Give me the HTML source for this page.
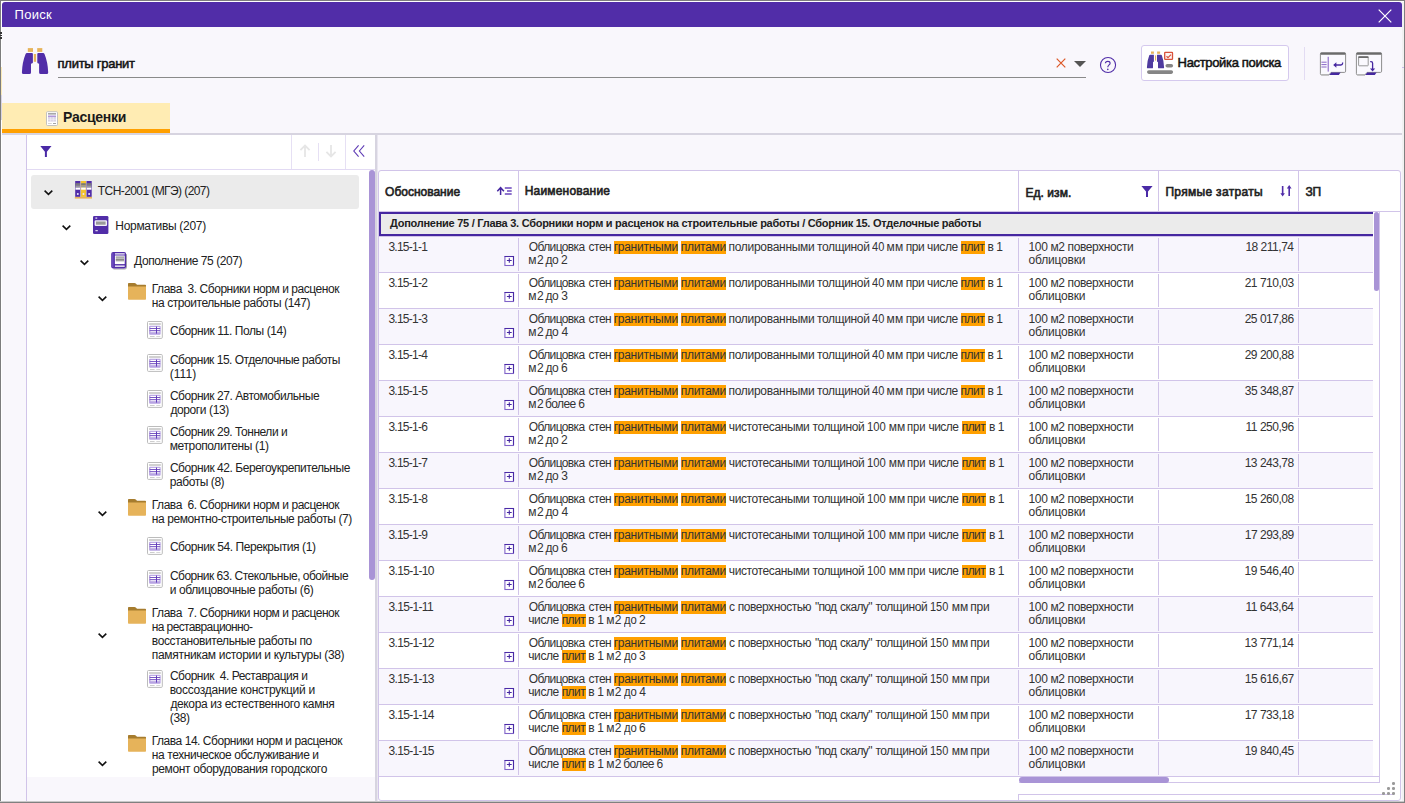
<!DOCTYPE html>
<html lang="ru"><head><meta charset="utf-8"><title>Поиск</title>
<style>
html,body{margin:0;padding:0;}
body{width:1405px;height:803px;overflow:hidden;background:#f9f7fc;font-family:"Liberation Sans",sans-serif;position:relative;}
.a{position:absolute;}
.t{position:absolute;white-space:pre;font-family:"Liberation Sans",sans-serif;}
.hl{background:#ffa000;}
svg{position:absolute;overflow:visible;}
</style></head><body>
<div class="a" style="left:0px;top:0px;width:1405px;height:803px;background:#7d7d7d;"></div>
<div class="a" style="left:1px;top:1px;width:1403px;height:801px;background:#ffffff;"></div>
<div class="a" style="left:1402px;top:2px;width:2px;height:800px;background:#f1f1f1;"></div>
<div class="a" style="left:2px;top:2px;width:1400px;height:799px;background:#f9f7fc;border-radius:3px 3px 0 0;"></div>
<div class="a" style="left:2px;top:2px;width:1400px;height:25px;background:#512da8;border-radius:3px 3px 0 0;"></div>
<div class="a" style="left:0px;top:801px;width:1405px;height:1px;background:#c9c9c9;"></div>
<div class="a" style="left:0px;top:802px;width:1405px;height:1px;background:#808080;"></div>
<div class="a" style="left:1404px;top:0px;width:1px;height:803px;background:#808080;"></div>
<div class="t" style="left:14.5px;top:7px;font-size:13px;font-weight:400;color:#ffffff;line-height:15px;letter-spacing:0.294px;">Поиск</div>
<svg style="left:1377.5px;top:8.6px" width="14" height="14" viewBox="0 0 14 14"><path d="M0.7 0.7L13.3 13.3M13.3 0.7L0.7 13.3" stroke="#fff" stroke-width="1.2" fill="none"/></svg>
<svg style="left:21px;top:47px" width="28" height="28" viewBox="21 47 28 28">
<rect x="27.8" y="48.1" width="5.2" height="3.8" fill="#e6b35a"/><rect x="37.2" y="48.1" width="5.1" height="3.8" fill="#e6b35a"/>
<rect x="33.8" y="54" width="2.3" height="7.8" fill="#e6b35a"/>
<path d="M27 52.9 H31.9 Q32.9 52.9 32.9 53.9 V62.5 Q32.9 63.5 31 63.7 V72.4 Q31 73.9 29.5 73.9 H23.4 Q21.9 73.9 21.9 72.4 Q22.3 62 25.6 54 Q26 52.9 27 52.9Z" fill="#512da8"/>
<path d="M43.1 52.9 H38.3 Q37.3 52.9 37.3 53.9 V62.5 Q37.3 63.5 39.1 63.7 V72.4 Q39.1 73.9 40.6 73.9 H46.7 Q48.2 73.9 48.2 72.4 Q47.8 62 44.5 54 Q44.1 52.9 43.1 52.9Z" fill="#512da8"/>
</svg>
<div class="t" style="left:57.6px;top:56px;font-size:13px;font-weight:400;color:#111;line-height:15px;letter-spacing:-0.267px;-webkit-text-stroke:0.5px #111;">плиты гранит</div>
<div class="a" style="left:58px;top:77px;width:1028px;height:1px;background:#8a8a8a;"></div>
<svg style="left:1056px;top:58px" width="10" height="10" viewBox="0 0 10 10"><path d="M0.7 0.7L9.3 9.3M9.3 0.7L0.7 9.3" stroke="#dc5726" stroke-width="1.2" fill="none"/></svg>
<svg style="left:1074px;top:61px" width="12" height="6" viewBox="0 0 12 6"><path d="M0 0H12L6 6Z" fill="#555"/></svg>
<svg style="left:1099px;top:56px" width="18" height="18" viewBox="0 0 18 18"><circle cx="9.02" cy="9" r="7.55" fill="none" stroke="#512da8" stroke-width="1.1"/><path d="M6.4 7.3Q6.5 5.3 8.8 5.3Q11.1 5.3 11.1 7.2Q11.1 8.3 9.9 9.1Q8.8 9.9 8.8 11.2" fill="none" stroke="#512da8" stroke-width="1.15"/><circle cx="8.8" cy="13.4" r="0.8" fill="#512da8"/></svg>
<div class="a" style="left:1141px;top:45px;width:146px;height:34px;background:#ffffff;border:1px solid #d5c9ee;border-radius:3px;"></div>
<div class="t" style="left:1177.6px;top:55px;font-size:13px;font-weight:400;color:#111;line-height:15px;letter-spacing:-0.34px;-webkit-text-stroke:0.5px #111;">Настройка поиска</div>
<div class="a" style="left:1304px;top:47px;width:1px;height:33px;background:#e3dcf3;"></div>
<div class="a" style="left:2px;top:103px;width:168px;height:26px;background:#ffecb3;"></div>
<div class="a" style="left:2px;top:129px;width:168px;height:4px;background:#ffa000;"></div>
<div class="a" style="left:2px;top:133px;width:1400px;height:2px;background:#d7d4e0;"></div>
<div class="t" style="left:63px;top:108px;font-size:14px;font-weight:700;color:#1a1a1a;line-height:18px;letter-spacing:-0.273px;">Расценки</div>
<div class="a" style="left:26px;top:135px;width:1px;height:666px;background:#d1c4e9;"></div>
<div class="a" style="left:27px;top:135px;width:348px;height:35px;background:#ffffff;"></div>
<div class="a" style="left:27px;top:169px;width:348px;height:1px;background:#e2daf3;"></div>
<div class="a" style="left:27px;top:170px;width:348px;height:607px;background:#ffffff;"></div>
<div class="a" style="left:375px;top:135px;width:2px;height:666px;background:#d7d4e0;"></div>
<div class="a" style="left:377px;top:135px;width:1px;height:666px;background:#e9e6f0;"></div>
<div class="a" style="left:369.3px;top:170px;width:5.5px;height:410px;background:#a994d6;border-radius:3px;"></div>
<div class="a" style="left:291px;top:135px;width:1px;height:34px;background:#e6e0f4;"></div>
<div class="a" style="left:345px;top:135px;width:1px;height:34px;background:#e6e0f4;"></div>
<div class="a" style="left:318px;top:143px;width:1px;height:18px;background:#e6e0f4;"></div>
<div class="a" style="left:31px;top:175px;width:328px;height:34px;background:#ebebeb;border-radius:3px;"></div>
<div class="a" style="left:378px;top:170px;width:1021px;height:629px;background:#ffffff;border:1px solid #d1c4e9;border-radius:3px;"></div>
<div class="a" style="left:518px;top:171px;width:1px;height:40px;background:#d1c4e9;"></div>
<div class="a" style="left:1018px;top:171px;width:1px;height:40px;background:#d1c4e9;"></div>
<div class="a" style="left:1158px;top:171px;width:1px;height:40px;background:#d1c4e9;"></div>
<div class="a" style="left:1298px;top:171px;width:1px;height:40px;background:#d1c4e9;"></div>
<div class="a" style="left:379px;top:211px;width:1021px;height:1px;background:#d1c4e9;"></div>
<div class="a" style="left:1379px;top:212px;width:1px;height:571px;background:#d1c4e9;"></div>
<div class="t" style="left:385.1px;top:185px;font-size:12px;font-weight:400;color:#212121;line-height:14px;letter-spacing:-0.01px;-webkit-text-stroke:0.6px #212121;">Обоснование</div>
<div class="t" style="left:524.7px;top:184px;font-size:12px;font-weight:400;color:#212121;line-height:14px;letter-spacing:0.193px;-webkit-text-stroke:0.6px #212121;">Наименование</div>
<div class="t" style="left:1025.4px;top:186px;font-size:12px;font-weight:400;color:#212121;line-height:14px;letter-spacing:0.066px;-webkit-text-stroke:0.6px #212121;">Ед. изм.</div>
<div class="t" style="left:1165.4px;top:185px;font-size:12px;font-weight:400;color:#212121;line-height:14px;letter-spacing:0.309px;-webkit-text-stroke:0.6px #212121;">Прямые затраты</div>
<div class="t" style="left:1305.4px;top:185px;font-size:12px;font-weight:400;color:#212121;line-height:14px;letter-spacing:-0.188px;-webkit-text-stroke:0.6px #212121;">ЗП</div>
<div class="a" style="left:379px;top:212px;width:994px;height:24px;background:#ebebeb;box-sizing:border-box;border:2px solid #4527a0;border-right:none;"></div>
<div class="t" style="left:390px;top:217px;font-size:11px;font-weight:700;color:#212121;line-height:13px;letter-spacing:-0.267px;">Дополнение 75 / Глава 3. Сборники норм и расценок на строительные работы / Сборник 15. Отделочные работы</div>
<div class="a" style="left:379px;top:236px;width:994px;height:1px;background:#d1c4e9;"></div>
<div class="a" style="left:379px;top:237px;width:994px;height:35px;background:#f8f6fd;"></div>
<div class="a" style="left:379px;top:272px;width:994px;height:1px;background:#d1c4e9;"></div>
<div class="a" style="left:379px;top:308px;width:994px;height:1px;background:#d1c4e9;"></div>
<div class="a" style="left:379px;top:309px;width:994px;height:35px;background:#f8f6fd;"></div>
<div class="a" style="left:379px;top:344px;width:994px;height:1px;background:#d1c4e9;"></div>
<div class="a" style="left:379px;top:380px;width:994px;height:1px;background:#d1c4e9;"></div>
<div class="a" style="left:379px;top:381px;width:994px;height:35px;background:#f8f6fd;"></div>
<div class="a" style="left:379px;top:416px;width:994px;height:1px;background:#d1c4e9;"></div>
<div class="a" style="left:379px;top:452px;width:994px;height:1px;background:#d1c4e9;"></div>
<div class="a" style="left:379px;top:453px;width:994px;height:35px;background:#f8f6fd;"></div>
<div class="a" style="left:379px;top:488px;width:994px;height:1px;background:#d1c4e9;"></div>
<div class="a" style="left:379px;top:524px;width:994px;height:1px;background:#d1c4e9;"></div>
<div class="a" style="left:379px;top:525px;width:994px;height:35px;background:#f8f6fd;"></div>
<div class="a" style="left:379px;top:560px;width:994px;height:1px;background:#d1c4e9;"></div>
<div class="a" style="left:379px;top:596px;width:994px;height:1px;background:#d1c4e9;"></div>
<div class="a" style="left:379px;top:597px;width:994px;height:35px;background:#f8f6fd;"></div>
<div class="a" style="left:379px;top:632px;width:994px;height:1px;background:#d1c4e9;"></div>
<div class="a" style="left:379px;top:668px;width:994px;height:1px;background:#d1c4e9;"></div>
<div class="a" style="left:379px;top:669px;width:994px;height:35px;background:#f8f6fd;"></div>
<div class="a" style="left:379px;top:704px;width:994px;height:1px;background:#d1c4e9;"></div>
<div class="a" style="left:379px;top:740px;width:994px;height:1px;background:#d1c4e9;"></div>
<div class="a" style="left:379px;top:741px;width:994px;height:35px;background:#f8f6fd;"></div>
<div class="a" style="left:379px;top:776px;width:1000px;height:1px;background:#d1c4e9;"></div>
<div class="a" style="left:518px;top:237.6px;width:1px;height:33.6px;background:#d1c4e9;"></div>
<div class="a" style="left:1018px;top:237.6px;width:1px;height:33.6px;background:#d1c4e9;"></div>
<div class="a" style="left:1158px;top:237.6px;width:1px;height:33.6px;background:#d1c4e9;"></div>
<div class="a" style="left:1298px;top:237.6px;width:1px;height:33.6px;background:#d1c4e9;"></div>
<div class="a" style="left:518px;top:273.6px;width:1px;height:33.6px;background:#d1c4e9;"></div>
<div class="a" style="left:1018px;top:273.6px;width:1px;height:33.6px;background:#d1c4e9;"></div>
<div class="a" style="left:1158px;top:273.6px;width:1px;height:33.6px;background:#d1c4e9;"></div>
<div class="a" style="left:1298px;top:273.6px;width:1px;height:33.6px;background:#d1c4e9;"></div>
<div class="a" style="left:518px;top:309.6px;width:1px;height:33.6px;background:#d1c4e9;"></div>
<div class="a" style="left:1018px;top:309.6px;width:1px;height:33.6px;background:#d1c4e9;"></div>
<div class="a" style="left:1158px;top:309.6px;width:1px;height:33.6px;background:#d1c4e9;"></div>
<div class="a" style="left:1298px;top:309.6px;width:1px;height:33.6px;background:#d1c4e9;"></div>
<div class="a" style="left:518px;top:345.6px;width:1px;height:33.6px;background:#d1c4e9;"></div>
<div class="a" style="left:1018px;top:345.6px;width:1px;height:33.6px;background:#d1c4e9;"></div>
<div class="a" style="left:1158px;top:345.6px;width:1px;height:33.6px;background:#d1c4e9;"></div>
<div class="a" style="left:1298px;top:345.6px;width:1px;height:33.6px;background:#d1c4e9;"></div>
<div class="a" style="left:518px;top:381.6px;width:1px;height:33.6px;background:#d1c4e9;"></div>
<div class="a" style="left:1018px;top:381.6px;width:1px;height:33.6px;background:#d1c4e9;"></div>
<div class="a" style="left:1158px;top:381.6px;width:1px;height:33.6px;background:#d1c4e9;"></div>
<div class="a" style="left:1298px;top:381.6px;width:1px;height:33.6px;background:#d1c4e9;"></div>
<div class="a" style="left:518px;top:417.6px;width:1px;height:33.6px;background:#d1c4e9;"></div>
<div class="a" style="left:1018px;top:417.6px;width:1px;height:33.6px;background:#d1c4e9;"></div>
<div class="a" style="left:1158px;top:417.6px;width:1px;height:33.6px;background:#d1c4e9;"></div>
<div class="a" style="left:1298px;top:417.6px;width:1px;height:33.6px;background:#d1c4e9;"></div>
<div class="a" style="left:518px;top:453.6px;width:1px;height:33.6px;background:#d1c4e9;"></div>
<div class="a" style="left:1018px;top:453.6px;width:1px;height:33.6px;background:#d1c4e9;"></div>
<div class="a" style="left:1158px;top:453.6px;width:1px;height:33.6px;background:#d1c4e9;"></div>
<div class="a" style="left:1298px;top:453.6px;width:1px;height:33.6px;background:#d1c4e9;"></div>
<div class="a" style="left:518px;top:489.6px;width:1px;height:33.6px;background:#d1c4e9;"></div>
<div class="a" style="left:1018px;top:489.6px;width:1px;height:33.6px;background:#d1c4e9;"></div>
<div class="a" style="left:1158px;top:489.6px;width:1px;height:33.6px;background:#d1c4e9;"></div>
<div class="a" style="left:1298px;top:489.6px;width:1px;height:33.6px;background:#d1c4e9;"></div>
<div class="a" style="left:518px;top:525.6px;width:1px;height:33.6px;background:#d1c4e9;"></div>
<div class="a" style="left:1018px;top:525.6px;width:1px;height:33.6px;background:#d1c4e9;"></div>
<div class="a" style="left:1158px;top:525.6px;width:1px;height:33.6px;background:#d1c4e9;"></div>
<div class="a" style="left:1298px;top:525.6px;width:1px;height:33.6px;background:#d1c4e9;"></div>
<div class="a" style="left:518px;top:561.6px;width:1px;height:33.6px;background:#d1c4e9;"></div>
<div class="a" style="left:1018px;top:561.6px;width:1px;height:33.6px;background:#d1c4e9;"></div>
<div class="a" style="left:1158px;top:561.6px;width:1px;height:33.6px;background:#d1c4e9;"></div>
<div class="a" style="left:1298px;top:561.6px;width:1px;height:33.6px;background:#d1c4e9;"></div>
<div class="a" style="left:518px;top:597.6px;width:1px;height:33.6px;background:#d1c4e9;"></div>
<div class="a" style="left:1018px;top:597.6px;width:1px;height:33.6px;background:#d1c4e9;"></div>
<div class="a" style="left:1158px;top:597.6px;width:1px;height:33.6px;background:#d1c4e9;"></div>
<div class="a" style="left:1298px;top:597.6px;width:1px;height:33.6px;background:#d1c4e9;"></div>
<div class="a" style="left:518px;top:633.6px;width:1px;height:33.6px;background:#d1c4e9;"></div>
<div class="a" style="left:1018px;top:633.6px;width:1px;height:33.6px;background:#d1c4e9;"></div>
<div class="a" style="left:1158px;top:633.6px;width:1px;height:33.6px;background:#d1c4e9;"></div>
<div class="a" style="left:1298px;top:633.6px;width:1px;height:33.6px;background:#d1c4e9;"></div>
<div class="a" style="left:518px;top:669.6px;width:1px;height:33.6px;background:#d1c4e9;"></div>
<div class="a" style="left:1018px;top:669.6px;width:1px;height:33.6px;background:#d1c4e9;"></div>
<div class="a" style="left:1158px;top:669.6px;width:1px;height:33.6px;background:#d1c4e9;"></div>
<div class="a" style="left:1298px;top:669.6px;width:1px;height:33.6px;background:#d1c4e9;"></div>
<div class="a" style="left:518px;top:705.6px;width:1px;height:33.6px;background:#d1c4e9;"></div>
<div class="a" style="left:1018px;top:705.6px;width:1px;height:33.6px;background:#d1c4e9;"></div>
<div class="a" style="left:1158px;top:705.6px;width:1px;height:33.6px;background:#d1c4e9;"></div>
<div class="a" style="left:1298px;top:705.6px;width:1px;height:33.6px;background:#d1c4e9;"></div>
<div class="a" style="left:518px;top:741.6px;width:1px;height:33.6px;background:#d1c4e9;"></div>
<div class="a" style="left:1018px;top:741.6px;width:1px;height:33.6px;background:#d1c4e9;"></div>
<div class="a" style="left:1158px;top:741.6px;width:1px;height:33.6px;background:#d1c4e9;"></div>
<div class="a" style="left:1298px;top:741.6px;width:1px;height:33.6px;background:#d1c4e9;"></div>
<div class="t" style="left:388.44px;top:240px;font-size:12px;color:#333333;line-height:14px;letter-spacing:-0.751px">3.15-1-1</div>
<div class="a" style="left:613.9px;top:241px;width:64.0px;height:13px;background:#ffa000;"></div>
<div class="a" style="left:680.9px;top:241px;width:45.2px;height:13px;background:#ffa000;"></div>
<div class="a" style="left:960.7px;top:241px;width:24.4px;height:13px;background:#ffa000;"></div>
<div class="t" style="left:528.83px;top:240px;font-size:12px;font-weight:400;color:#333333;line-height:14px;letter-spacing:-0.636px;">Облицовка</div>
<div class="t" style="left:588.59px;top:240px;font-size:12px;font-weight:400;color:#333333;line-height:14px;letter-spacing:-0.51px;">стен</div>
<div class="t" style="left:613.67px;top:240px;font-size:12px;font-weight:400;color:#333333;line-height:14px;letter-spacing:-0.256px;">гранитными</div>
<div class="t" style="left:680.67px;top:240px;font-size:12px;font-weight:400;color:#333333;line-height:14px;letter-spacing:-0.257px;">плитами</div>
<div class="t" style="left:728.47px;top:240px;font-size:12px;font-weight:400;color:#333333;line-height:14px;letter-spacing:-0.288px;">полированными</div>
<div class="t" style="left:816.89px;top:240px;font-size:12px;font-weight:400;color:#333333;line-height:14px;letter-spacing:-0.332px;">толщиной</div>
<div class="t" style="left:872.05px;top:240px;font-size:12px;font-weight:400;color:#333333;line-height:14px;transform-origin:0 0;transform:scaleX(0.9195);">40</div>
<div class="t" style="left:886.57px;top:240px;font-size:12px;font-weight:400;color:#333333;line-height:14px;letter-spacing:0.258px;">мм</div>
<div class="t" style="left:905.67px;top:240px;font-size:12px;font-weight:400;color:#333333;line-height:14px;letter-spacing:-0.405px;">при</div>
<div class="t" style="left:927.09px;top:240px;font-size:12px;font-weight:400;color:#333333;line-height:14px;letter-spacing:-0.373px;">числе</div>
<div class="t" style="left:960.47px;top:240px;font-size:12px;font-weight:400;color:#333333;line-height:14px;letter-spacing:-0.489px;">плит</div>
<div class="t" style="left:987.47px;top:240px;font-size:12px;font-weight:400;color:#333333;line-height:14px;letter-spacing:0px;">в</div>
<div class="t" style="left:996.29px;top:240px;font-size:12px;font-weight:400;color:#333333;line-height:14px;letter-spacing:0px;">1</div>
<div class="t" style="left:528.17px;top:253px;font-size:12px;font-weight:400;color:#333333;line-height:14px;letter-spacing:0.598px;">м2</div>
<div class="t" style="left:545.48px;top:253px;font-size:12px;font-weight:400;color:#333333;line-height:14px;letter-spacing:-0.366px;">до</div>
<div class="t" style="left:561.1px;top:253px;font-size:12px;font-weight:400;color:#333333;line-height:14px;letter-spacing:0px;">2</div>
<div class="t" style="left:1028.59px;top:240px;font-size:12px;font-weight:400;color:#333333;line-height:14px;letter-spacing:-0.383px;">100 м2 поверхности</div>
<div class="t" style="left:1028.6px;top:253px;font-size:12px;font-weight:400;color:#333333;line-height:14px;letter-spacing:-0.19px;">облицовки</div>
<div class="t" style="left:1245.38px;top:240px;font-size:12px;color:#333333;line-height:14px;letter-spacing:-0.479px">18 211,74</div>
<svg style="left:504px;top:256px" width="11" height="11" viewBox="0 0 11 11"><rect x="-0.3" y="-0.6" width="10.9" height="11.2" rx="1.5" fill="#fff" opacity="0.7"/><rect x="0.9" y="0.5" width="8.6" height="9" fill="#fff" stroke="#7f63c8" stroke-width="1.1"/><path d="M0.6 0.5H9.5V9" stroke="#4a2aa6" stroke-width="1.1" fill="none"/><path d="M5.3 2.2V6.8M2.9 4.5H7.7" stroke="#4527a0" stroke-width="1.1"/></svg>
<div class="t" style="left:388.44px;top:276px;font-size:12px;color:#333333;line-height:14px;letter-spacing:-0.751px">3.15-1-2</div>
<div class="a" style="left:613.9px;top:277px;width:64.0px;height:13px;background:#ffa000;"></div>
<div class="a" style="left:680.9px;top:277px;width:45.2px;height:13px;background:#ffa000;"></div>
<div class="a" style="left:960.7px;top:277px;width:24.4px;height:13px;background:#ffa000;"></div>
<div class="t" style="left:528.83px;top:276px;font-size:12px;font-weight:400;color:#333333;line-height:14px;letter-spacing:-0.636px;">Облицовка</div>
<div class="t" style="left:588.59px;top:276px;font-size:12px;font-weight:400;color:#333333;line-height:14px;letter-spacing:-0.51px;">стен</div>
<div class="t" style="left:613.67px;top:276px;font-size:12px;font-weight:400;color:#333333;line-height:14px;letter-spacing:-0.256px;">гранитными</div>
<div class="t" style="left:680.67px;top:276px;font-size:12px;font-weight:400;color:#333333;line-height:14px;letter-spacing:-0.257px;">плитами</div>
<div class="t" style="left:728.47px;top:276px;font-size:12px;font-weight:400;color:#333333;line-height:14px;letter-spacing:-0.288px;">полированными</div>
<div class="t" style="left:816.89px;top:276px;font-size:12px;font-weight:400;color:#333333;line-height:14px;letter-spacing:-0.332px;">толщиной</div>
<div class="t" style="left:872.05px;top:276px;font-size:12px;font-weight:400;color:#333333;line-height:14px;transform-origin:0 0;transform:scaleX(0.9195);">40</div>
<div class="t" style="left:886.57px;top:276px;font-size:12px;font-weight:400;color:#333333;line-height:14px;letter-spacing:0.258px;">мм</div>
<div class="t" style="left:905.67px;top:276px;font-size:12px;font-weight:400;color:#333333;line-height:14px;letter-spacing:-0.405px;">при</div>
<div class="t" style="left:927.09px;top:276px;font-size:12px;font-weight:400;color:#333333;line-height:14px;letter-spacing:-0.373px;">числе</div>
<div class="t" style="left:960.47px;top:276px;font-size:12px;font-weight:400;color:#333333;line-height:14px;letter-spacing:-0.489px;">плит</div>
<div class="t" style="left:987.47px;top:276px;font-size:12px;font-weight:400;color:#333333;line-height:14px;letter-spacing:0px;">в</div>
<div class="t" style="left:996.29px;top:276px;font-size:12px;font-weight:400;color:#333333;line-height:14px;letter-spacing:0px;">1</div>
<div class="t" style="left:528.17px;top:289px;font-size:12px;font-weight:400;color:#333333;line-height:14px;letter-spacing:0.598px;">м2</div>
<div class="t" style="left:545.48px;top:289px;font-size:12px;font-weight:400;color:#333333;line-height:14px;letter-spacing:-0.366px;">до</div>
<div class="t" style="left:561.24px;top:289px;font-size:12px;font-weight:400;color:#333333;line-height:14px;letter-spacing:0px;">3</div>
<div class="t" style="left:1028.59px;top:276px;font-size:12px;font-weight:400;color:#333333;line-height:14px;letter-spacing:-0.383px;">100 м2 поверхности</div>
<div class="t" style="left:1028.6px;top:289px;font-size:12px;font-weight:400;color:#333333;line-height:14px;letter-spacing:-0.19px;">облицовки</div>
<div class="t" style="left:1244.67px;top:276px;font-size:12px;color:#333333;line-height:14px;letter-spacing:-0.479px">21 710,03</div>
<svg style="left:504px;top:292px" width="11" height="11" viewBox="0 0 11 11"><rect x="-0.3" y="-0.6" width="10.9" height="11.2" rx="1.5" fill="#fff" opacity="0.7"/><rect x="0.9" y="0.5" width="8.6" height="9" fill="#fff" stroke="#7f63c8" stroke-width="1.1"/><path d="M0.6 0.5H9.5V9" stroke="#4a2aa6" stroke-width="1.1" fill="none"/><path d="M5.3 2.2V6.8M2.9 4.5H7.7" stroke="#4527a0" stroke-width="1.1"/></svg>
<div class="t" style="left:388.44px;top:312px;font-size:12px;color:#333333;line-height:14px;letter-spacing:-0.751px">3.15-1-3</div>
<div class="a" style="left:613.9px;top:313px;width:64.0px;height:13px;background:#ffa000;"></div>
<div class="a" style="left:680.9px;top:313px;width:45.2px;height:13px;background:#ffa000;"></div>
<div class="a" style="left:960.7px;top:313px;width:24.4px;height:13px;background:#ffa000;"></div>
<div class="t" style="left:528.83px;top:312px;font-size:12px;font-weight:400;color:#333333;line-height:14px;letter-spacing:-0.636px;">Облицовка</div>
<div class="t" style="left:588.59px;top:312px;font-size:12px;font-weight:400;color:#333333;line-height:14px;letter-spacing:-0.51px;">стен</div>
<div class="t" style="left:613.67px;top:312px;font-size:12px;font-weight:400;color:#333333;line-height:14px;letter-spacing:-0.256px;">гранитными</div>
<div class="t" style="left:680.67px;top:312px;font-size:12px;font-weight:400;color:#333333;line-height:14px;letter-spacing:-0.257px;">плитами</div>
<div class="t" style="left:728.47px;top:312px;font-size:12px;font-weight:400;color:#333333;line-height:14px;letter-spacing:-0.288px;">полированными</div>
<div class="t" style="left:816.89px;top:312px;font-size:12px;font-weight:400;color:#333333;line-height:14px;letter-spacing:-0.332px;">толщиной</div>
<div class="t" style="left:872.05px;top:312px;font-size:12px;font-weight:400;color:#333333;line-height:14px;transform-origin:0 0;transform:scaleX(0.9195);">40</div>
<div class="t" style="left:886.57px;top:312px;font-size:12px;font-weight:400;color:#333333;line-height:14px;letter-spacing:0.258px;">мм</div>
<div class="t" style="left:905.67px;top:312px;font-size:12px;font-weight:400;color:#333333;line-height:14px;letter-spacing:-0.405px;">при</div>
<div class="t" style="left:927.09px;top:312px;font-size:12px;font-weight:400;color:#333333;line-height:14px;letter-spacing:-0.373px;">числе</div>
<div class="t" style="left:960.47px;top:312px;font-size:12px;font-weight:400;color:#333333;line-height:14px;letter-spacing:-0.489px;">плит</div>
<div class="t" style="left:987.47px;top:312px;font-size:12px;font-weight:400;color:#333333;line-height:14px;letter-spacing:0px;">в</div>
<div class="t" style="left:996.29px;top:312px;font-size:12px;font-weight:400;color:#333333;line-height:14px;letter-spacing:0px;">1</div>
<div class="t" style="left:528.17px;top:325px;font-size:12px;font-weight:400;color:#333333;line-height:14px;letter-spacing:0.598px;">м2</div>
<div class="t" style="left:545.48px;top:325px;font-size:12px;font-weight:400;color:#333333;line-height:14px;letter-spacing:-0.366px;">до</div>
<div class="t" style="left:561.42px;top:325px;font-size:12px;font-weight:400;color:#333333;line-height:14px;letter-spacing:0px;">4</div>
<div class="t" style="left:1028.59px;top:312px;font-size:12px;font-weight:400;color:#333333;line-height:14px;letter-spacing:-0.383px;">100 м2 поверхности</div>
<div class="t" style="left:1028.6px;top:325px;font-size:12px;font-weight:400;color:#333333;line-height:14px;letter-spacing:-0.19px;">облицовки</div>
<div class="t" style="left:1244.67px;top:312px;font-size:12px;color:#333333;line-height:14px;letter-spacing:-0.479px">25 017,86</div>
<svg style="left:504px;top:328px" width="11" height="11" viewBox="0 0 11 11"><rect x="-0.3" y="-0.6" width="10.9" height="11.2" rx="1.5" fill="#fff" opacity="0.7"/><rect x="0.9" y="0.5" width="8.6" height="9" fill="#fff" stroke="#7f63c8" stroke-width="1.1"/><path d="M0.6 0.5H9.5V9" stroke="#4a2aa6" stroke-width="1.1" fill="none"/><path d="M5.3 2.2V6.8M2.9 4.5H7.7" stroke="#4527a0" stroke-width="1.1"/></svg>
<div class="t" style="left:388.44px;top:348px;font-size:12px;color:#333333;line-height:14px;letter-spacing:-0.751px">3.15-1-4</div>
<div class="a" style="left:613.9px;top:349px;width:64.0px;height:13px;background:#ffa000;"></div>
<div class="a" style="left:680.9px;top:349px;width:45.2px;height:13px;background:#ffa000;"></div>
<div class="a" style="left:960.7px;top:349px;width:24.4px;height:13px;background:#ffa000;"></div>
<div class="t" style="left:528.83px;top:348px;font-size:12px;font-weight:400;color:#333333;line-height:14px;letter-spacing:-0.636px;">Облицовка</div>
<div class="t" style="left:588.59px;top:348px;font-size:12px;font-weight:400;color:#333333;line-height:14px;letter-spacing:-0.51px;">стен</div>
<div class="t" style="left:613.67px;top:348px;font-size:12px;font-weight:400;color:#333333;line-height:14px;letter-spacing:-0.256px;">гранитными</div>
<div class="t" style="left:680.67px;top:348px;font-size:12px;font-weight:400;color:#333333;line-height:14px;letter-spacing:-0.257px;">плитами</div>
<div class="t" style="left:728.47px;top:348px;font-size:12px;font-weight:400;color:#333333;line-height:14px;letter-spacing:-0.288px;">полированными</div>
<div class="t" style="left:816.89px;top:348px;font-size:12px;font-weight:400;color:#333333;line-height:14px;letter-spacing:-0.332px;">толщиной</div>
<div class="t" style="left:872.05px;top:348px;font-size:12px;font-weight:400;color:#333333;line-height:14px;transform-origin:0 0;transform:scaleX(0.9195);">40</div>
<div class="t" style="left:886.57px;top:348px;font-size:12px;font-weight:400;color:#333333;line-height:14px;letter-spacing:0.258px;">мм</div>
<div class="t" style="left:905.67px;top:348px;font-size:12px;font-weight:400;color:#333333;line-height:14px;letter-spacing:-0.405px;">при</div>
<div class="t" style="left:927.09px;top:348px;font-size:12px;font-weight:400;color:#333333;line-height:14px;letter-spacing:-0.373px;">числе</div>
<div class="t" style="left:960.47px;top:348px;font-size:12px;font-weight:400;color:#333333;line-height:14px;letter-spacing:-0.489px;">плит</div>
<div class="t" style="left:987.47px;top:348px;font-size:12px;font-weight:400;color:#333333;line-height:14px;letter-spacing:0px;">в</div>
<div class="t" style="left:996.29px;top:348px;font-size:12px;font-weight:400;color:#333333;line-height:14px;letter-spacing:0px;">1</div>
<div class="t" style="left:528.17px;top:361px;font-size:12px;font-weight:400;color:#333333;line-height:14px;letter-spacing:0.598px;">м2</div>
<div class="t" style="left:545.48px;top:361px;font-size:12px;font-weight:400;color:#333333;line-height:14px;letter-spacing:-0.366px;">до</div>
<div class="t" style="left:561.09px;top:361px;font-size:12px;font-weight:400;color:#333333;line-height:14px;letter-spacing:0px;">6</div>
<div class="t" style="left:1028.59px;top:348px;font-size:12px;font-weight:400;color:#333333;line-height:14px;letter-spacing:-0.383px;">100 м2 поверхности</div>
<div class="t" style="left:1028.6px;top:361px;font-size:12px;font-weight:400;color:#333333;line-height:14px;letter-spacing:-0.19px;">облицовки</div>
<div class="t" style="left:1244.66px;top:348px;font-size:12px;color:#333333;line-height:14px;letter-spacing:-0.479px">29 200,88</div>
<svg style="left:504px;top:364px" width="11" height="11" viewBox="0 0 11 11"><rect x="-0.3" y="-0.6" width="10.9" height="11.2" rx="1.5" fill="#fff" opacity="0.7"/><rect x="0.9" y="0.5" width="8.6" height="9" fill="#fff" stroke="#7f63c8" stroke-width="1.1"/><path d="M0.6 0.5H9.5V9" stroke="#4a2aa6" stroke-width="1.1" fill="none"/><path d="M5.3 2.2V6.8M2.9 4.5H7.7" stroke="#4527a0" stroke-width="1.1"/></svg>
<div class="t" style="left:388.44px;top:384px;font-size:12px;color:#333333;line-height:14px;letter-spacing:-0.751px">3.15-1-5</div>
<div class="a" style="left:613.9px;top:385px;width:64.0px;height:13px;background:#ffa000;"></div>
<div class="a" style="left:680.9px;top:385px;width:45.2px;height:13px;background:#ffa000;"></div>
<div class="a" style="left:960.7px;top:385px;width:24.4px;height:13px;background:#ffa000;"></div>
<div class="t" style="left:528.83px;top:384px;font-size:12px;font-weight:400;color:#333333;line-height:14px;letter-spacing:-0.636px;">Облицовка</div>
<div class="t" style="left:588.59px;top:384px;font-size:12px;font-weight:400;color:#333333;line-height:14px;letter-spacing:-0.51px;">стен</div>
<div class="t" style="left:613.67px;top:384px;font-size:12px;font-weight:400;color:#333333;line-height:14px;letter-spacing:-0.256px;">гранитными</div>
<div class="t" style="left:680.67px;top:384px;font-size:12px;font-weight:400;color:#333333;line-height:14px;letter-spacing:-0.257px;">плитами</div>
<div class="t" style="left:728.47px;top:384px;font-size:12px;font-weight:400;color:#333333;line-height:14px;letter-spacing:-0.288px;">полированными</div>
<div class="t" style="left:816.89px;top:384px;font-size:12px;font-weight:400;color:#333333;line-height:14px;letter-spacing:-0.332px;">толщиной</div>
<div class="t" style="left:872.05px;top:384px;font-size:12px;font-weight:400;color:#333333;line-height:14px;transform-origin:0 0;transform:scaleX(0.9195);">40</div>
<div class="t" style="left:886.57px;top:384px;font-size:12px;font-weight:400;color:#333333;line-height:14px;letter-spacing:0.258px;">мм</div>
<div class="t" style="left:905.67px;top:384px;font-size:12px;font-weight:400;color:#333333;line-height:14px;letter-spacing:-0.405px;">при</div>
<div class="t" style="left:927.09px;top:384px;font-size:12px;font-weight:400;color:#333333;line-height:14px;letter-spacing:-0.373px;">числе</div>
<div class="t" style="left:960.47px;top:384px;font-size:12px;font-weight:400;color:#333333;line-height:14px;letter-spacing:-0.489px;">плит</div>
<div class="t" style="left:987.47px;top:384px;font-size:12px;font-weight:400;color:#333333;line-height:14px;letter-spacing:0px;">в</div>
<div class="t" style="left:996.29px;top:384px;font-size:12px;font-weight:400;color:#333333;line-height:14px;letter-spacing:0px;">1</div>
<div class="t" style="left:528.17px;top:397px;font-size:12px;font-weight:400;color:#333333;line-height:14px;letter-spacing:0.598px;">м2</div>
<div class="t" style="left:545.1px;top:397px;font-size:12px;font-weight:400;color:#333333;line-height:14px;letter-spacing:-0.626px;">более</div>
<div class="t" style="left:578.19px;top:397px;font-size:12px;font-weight:400;color:#333333;line-height:14px;letter-spacing:0px;">6</div>
<div class="t" style="left:1028.59px;top:384px;font-size:12px;font-weight:400;color:#333333;line-height:14px;letter-spacing:-0.383px;">100 м2 поверхности</div>
<div class="t" style="left:1028.6px;top:397px;font-size:12px;font-weight:400;color:#333333;line-height:14px;letter-spacing:-0.19px;">облицовки</div>
<div class="t" style="left:1244.74px;top:384px;font-size:12px;color:#333333;line-height:14px;letter-spacing:-0.479px">35 348,87</div>
<svg style="left:504px;top:400px" width="11" height="11" viewBox="0 0 11 11"><rect x="-0.3" y="-0.6" width="10.9" height="11.2" rx="1.5" fill="#fff" opacity="0.7"/><rect x="0.9" y="0.5" width="8.6" height="9" fill="#fff" stroke="#7f63c8" stroke-width="1.1"/><path d="M0.6 0.5H9.5V9" stroke="#4a2aa6" stroke-width="1.1" fill="none"/><path d="M5.3 2.2V6.8M2.9 4.5H7.7" stroke="#4527a0" stroke-width="1.1"/></svg>
<div class="t" style="left:388.44px;top:420px;font-size:12px;color:#333333;line-height:14px;letter-spacing:-0.751px">3.15-1-6</div>
<div class="a" style="left:613.9px;top:421px;width:64.0px;height:13px;background:#ffa000;"></div>
<div class="a" style="left:680.9px;top:421px;width:45.2px;height:13px;background:#ffa000;"></div>
<div class="a" style="left:961.9px;top:421px;width:24.3px;height:13px;background:#ffa000;"></div>
<div class="t" style="left:528.83px;top:420px;font-size:12px;font-weight:400;color:#333333;line-height:14px;letter-spacing:-0.636px;">Облицовка</div>
<div class="t" style="left:588.59px;top:420px;font-size:12px;font-weight:400;color:#333333;line-height:14px;letter-spacing:-0.51px;">стен</div>
<div class="t" style="left:613.67px;top:420px;font-size:12px;font-weight:400;color:#333333;line-height:14px;letter-spacing:-0.256px;">гранитными</div>
<div class="t" style="left:680.67px;top:420px;font-size:12px;font-weight:400;color:#333333;line-height:14px;letter-spacing:-0.257px;">плитами</div>
<div class="t" style="left:728.79px;top:420px;font-size:12px;font-weight:400;color:#333333;line-height:14px;letter-spacing:-0.383px;">чистотесаными</div>
<div class="t" style="left:812.59px;top:420px;font-size:12px;font-weight:400;color:#333333;line-height:14px;letter-spacing:-0.475px;">толщиной</div>
<div class="t" style="left:867.44px;top:420px;font-size:12px;font-weight:400;color:#333333;line-height:14px;transform-origin:0 0;transform:scaleX(0.9384);">100</div>
<div class="t" style="left:888.67px;top:420px;font-size:12px;font-weight:400;color:#333333;line-height:14px;letter-spacing:0.058px;">мм</div>
<div class="t" style="left:907.42px;top:420px;font-size:12px;font-weight:400;color:#333333;line-height:14px;transform-origin:0 0;transform:scaleX(0.939);">при</div>
<div class="t" style="left:928.49px;top:420px;font-size:12px;font-weight:400;color:#333333;line-height:14px;letter-spacing:-0.548px;">числе</div>
<div class="t" style="left:961.67px;top:420px;font-size:12px;font-weight:400;color:#333333;line-height:14px;letter-spacing:-0.522px;">плит</div>
<div class="t" style="left:988.97px;top:420px;font-size:12px;font-weight:400;color:#333333;line-height:14px;letter-spacing:0px;">в</div>
<div class="t" style="left:997.69px;top:420px;font-size:12px;font-weight:400;color:#333333;line-height:14px;letter-spacing:0px;">1</div>
<div class="t" style="left:528.17px;top:433px;font-size:12px;font-weight:400;color:#333333;line-height:14px;letter-spacing:0.598px;">м2</div>
<div class="t" style="left:545.48px;top:433px;font-size:12px;font-weight:400;color:#333333;line-height:14px;letter-spacing:-0.366px;">до</div>
<div class="t" style="left:561.1px;top:433px;font-size:12px;font-weight:400;color:#333333;line-height:14px;letter-spacing:0px;">2</div>
<div class="t" style="left:1028.59px;top:420px;font-size:12px;font-weight:400;color:#333333;line-height:14px;letter-spacing:-0.383px;">100 м2 поверхности</div>
<div class="t" style="left:1028.6px;top:433px;font-size:12px;font-weight:400;color:#333333;line-height:14px;letter-spacing:-0.19px;">облицовки</div>
<div class="t" style="left:1245.56px;top:420px;font-size:12px;color:#333333;line-height:14px;letter-spacing:-0.479px">11 250,96</div>
<svg style="left:504px;top:436px" width="11" height="11" viewBox="0 0 11 11"><rect x="-0.3" y="-0.6" width="10.9" height="11.2" rx="1.5" fill="#fff" opacity="0.7"/><rect x="0.9" y="0.5" width="8.6" height="9" fill="#fff" stroke="#7f63c8" stroke-width="1.1"/><path d="M0.6 0.5H9.5V9" stroke="#4a2aa6" stroke-width="1.1" fill="none"/><path d="M5.3 2.2V6.8M2.9 4.5H7.7" stroke="#4527a0" stroke-width="1.1"/></svg>
<div class="t" style="left:388.44px;top:456px;font-size:12px;color:#333333;line-height:14px;letter-spacing:-0.751px">3.15-1-7</div>
<div class="a" style="left:613.9px;top:457px;width:64.0px;height:13px;background:#ffa000;"></div>
<div class="a" style="left:680.9px;top:457px;width:45.2px;height:13px;background:#ffa000;"></div>
<div class="a" style="left:961.9px;top:457px;width:24.3px;height:13px;background:#ffa000;"></div>
<div class="t" style="left:528.83px;top:456px;font-size:12px;font-weight:400;color:#333333;line-height:14px;letter-spacing:-0.636px;">Облицовка</div>
<div class="t" style="left:588.59px;top:456px;font-size:12px;font-weight:400;color:#333333;line-height:14px;letter-spacing:-0.51px;">стен</div>
<div class="t" style="left:613.67px;top:456px;font-size:12px;font-weight:400;color:#333333;line-height:14px;letter-spacing:-0.256px;">гранитными</div>
<div class="t" style="left:680.67px;top:456px;font-size:12px;font-weight:400;color:#333333;line-height:14px;letter-spacing:-0.257px;">плитами</div>
<div class="t" style="left:728.79px;top:456px;font-size:12px;font-weight:400;color:#333333;line-height:14px;letter-spacing:-0.383px;">чистотесаными</div>
<div class="t" style="left:812.59px;top:456px;font-size:12px;font-weight:400;color:#333333;line-height:14px;letter-spacing:-0.475px;">толщиной</div>
<div class="t" style="left:867.44px;top:456px;font-size:12px;font-weight:400;color:#333333;line-height:14px;transform-origin:0 0;transform:scaleX(0.9384);">100</div>
<div class="t" style="left:888.67px;top:456px;font-size:12px;font-weight:400;color:#333333;line-height:14px;letter-spacing:0.058px;">мм</div>
<div class="t" style="left:907.42px;top:456px;font-size:12px;font-weight:400;color:#333333;line-height:14px;transform-origin:0 0;transform:scaleX(0.939);">при</div>
<div class="t" style="left:928.49px;top:456px;font-size:12px;font-weight:400;color:#333333;line-height:14px;letter-spacing:-0.548px;">числе</div>
<div class="t" style="left:961.67px;top:456px;font-size:12px;font-weight:400;color:#333333;line-height:14px;letter-spacing:-0.522px;">плит</div>
<div class="t" style="left:988.97px;top:456px;font-size:12px;font-weight:400;color:#333333;line-height:14px;letter-spacing:0px;">в</div>
<div class="t" style="left:997.69px;top:456px;font-size:12px;font-weight:400;color:#333333;line-height:14px;letter-spacing:0px;">1</div>
<div class="t" style="left:528.17px;top:469px;font-size:12px;font-weight:400;color:#333333;line-height:14px;letter-spacing:0.598px;">м2</div>
<div class="t" style="left:545.48px;top:469px;font-size:12px;font-weight:400;color:#333333;line-height:14px;letter-spacing:-0.366px;">до</div>
<div class="t" style="left:561.24px;top:469px;font-size:12px;font-weight:400;color:#333333;line-height:14px;letter-spacing:0px;">3</div>
<div class="t" style="left:1028.59px;top:456px;font-size:12px;font-weight:400;color:#333333;line-height:14px;letter-spacing:-0.383px;">100 м2 поверхности</div>
<div class="t" style="left:1028.6px;top:469px;font-size:12px;font-weight:400;color:#333333;line-height:14px;letter-spacing:-0.19px;">облицовки</div>
<div class="t" style="left:1244.66px;top:456px;font-size:12px;color:#333333;line-height:14px;letter-spacing:-0.479px">13 243,78</div>
<svg style="left:504px;top:472px" width="11" height="11" viewBox="0 0 11 11"><rect x="-0.3" y="-0.6" width="10.9" height="11.2" rx="1.5" fill="#fff" opacity="0.7"/><rect x="0.9" y="0.5" width="8.6" height="9" fill="#fff" stroke="#7f63c8" stroke-width="1.1"/><path d="M0.6 0.5H9.5V9" stroke="#4a2aa6" stroke-width="1.1" fill="none"/><path d="M5.3 2.2V6.8M2.9 4.5H7.7" stroke="#4527a0" stroke-width="1.1"/></svg>
<div class="t" style="left:388.44px;top:492px;font-size:12px;color:#333333;line-height:14px;letter-spacing:-0.751px">3.15-1-8</div>
<div class="a" style="left:613.9px;top:493px;width:64.0px;height:13px;background:#ffa000;"></div>
<div class="a" style="left:680.9px;top:493px;width:45.2px;height:13px;background:#ffa000;"></div>
<div class="a" style="left:961.9px;top:493px;width:24.3px;height:13px;background:#ffa000;"></div>
<div class="t" style="left:528.83px;top:492px;font-size:12px;font-weight:400;color:#333333;line-height:14px;letter-spacing:-0.636px;">Облицовка</div>
<div class="t" style="left:588.59px;top:492px;font-size:12px;font-weight:400;color:#333333;line-height:14px;letter-spacing:-0.51px;">стен</div>
<div class="t" style="left:613.67px;top:492px;font-size:12px;font-weight:400;color:#333333;line-height:14px;letter-spacing:-0.256px;">гранитными</div>
<div class="t" style="left:680.67px;top:492px;font-size:12px;font-weight:400;color:#333333;line-height:14px;letter-spacing:-0.257px;">плитами</div>
<div class="t" style="left:728.79px;top:492px;font-size:12px;font-weight:400;color:#333333;line-height:14px;letter-spacing:-0.383px;">чистотесаными</div>
<div class="t" style="left:812.59px;top:492px;font-size:12px;font-weight:400;color:#333333;line-height:14px;letter-spacing:-0.475px;">толщиной</div>
<div class="t" style="left:867.44px;top:492px;font-size:12px;font-weight:400;color:#333333;line-height:14px;transform-origin:0 0;transform:scaleX(0.9384);">100</div>
<div class="t" style="left:888.67px;top:492px;font-size:12px;font-weight:400;color:#333333;line-height:14px;letter-spacing:0.058px;">мм</div>
<div class="t" style="left:907.42px;top:492px;font-size:12px;font-weight:400;color:#333333;line-height:14px;transform-origin:0 0;transform:scaleX(0.939);">при</div>
<div class="t" style="left:928.49px;top:492px;font-size:12px;font-weight:400;color:#333333;line-height:14px;letter-spacing:-0.548px;">числе</div>
<div class="t" style="left:961.67px;top:492px;font-size:12px;font-weight:400;color:#333333;line-height:14px;letter-spacing:-0.522px;">плит</div>
<div class="t" style="left:988.97px;top:492px;font-size:12px;font-weight:400;color:#333333;line-height:14px;letter-spacing:0px;">в</div>
<div class="t" style="left:997.69px;top:492px;font-size:12px;font-weight:400;color:#333333;line-height:14px;letter-spacing:0px;">1</div>
<div class="t" style="left:528.17px;top:505px;font-size:12px;font-weight:400;color:#333333;line-height:14px;letter-spacing:0.598px;">м2</div>
<div class="t" style="left:545.48px;top:505px;font-size:12px;font-weight:400;color:#333333;line-height:14px;letter-spacing:-0.366px;">до</div>
<div class="t" style="left:561.42px;top:505px;font-size:12px;font-weight:400;color:#333333;line-height:14px;letter-spacing:0px;">4</div>
<div class="t" style="left:1028.59px;top:492px;font-size:12px;font-weight:400;color:#333333;line-height:14px;letter-spacing:-0.383px;">100 м2 поверхности</div>
<div class="t" style="left:1028.6px;top:505px;font-size:12px;font-weight:400;color:#333333;line-height:14px;letter-spacing:-0.19px;">облицовки</div>
<div class="t" style="left:1244.66px;top:492px;font-size:12px;color:#333333;line-height:14px;letter-spacing:-0.479px">15 260,08</div>
<svg style="left:504px;top:508px" width="11" height="11" viewBox="0 0 11 11"><rect x="-0.3" y="-0.6" width="10.9" height="11.2" rx="1.5" fill="#fff" opacity="0.7"/><rect x="0.9" y="0.5" width="8.6" height="9" fill="#fff" stroke="#7f63c8" stroke-width="1.1"/><path d="M0.6 0.5H9.5V9" stroke="#4a2aa6" stroke-width="1.1" fill="none"/><path d="M5.3 2.2V6.8M2.9 4.5H7.7" stroke="#4527a0" stroke-width="1.1"/></svg>
<div class="t" style="left:388.44px;top:528px;font-size:12px;color:#333333;line-height:14px;letter-spacing:-0.751px">3.15-1-9</div>
<div class="a" style="left:613.9px;top:529px;width:64.0px;height:13px;background:#ffa000;"></div>
<div class="a" style="left:680.9px;top:529px;width:45.2px;height:13px;background:#ffa000;"></div>
<div class="a" style="left:961.9px;top:529px;width:24.3px;height:13px;background:#ffa000;"></div>
<div class="t" style="left:528.83px;top:528px;font-size:12px;font-weight:400;color:#333333;line-height:14px;letter-spacing:-0.636px;">Облицовка</div>
<div class="t" style="left:588.59px;top:528px;font-size:12px;font-weight:400;color:#333333;line-height:14px;letter-spacing:-0.51px;">стен</div>
<div class="t" style="left:613.67px;top:528px;font-size:12px;font-weight:400;color:#333333;line-height:14px;letter-spacing:-0.256px;">гранитными</div>
<div class="t" style="left:680.67px;top:528px;font-size:12px;font-weight:400;color:#333333;line-height:14px;letter-spacing:-0.257px;">плитами</div>
<div class="t" style="left:728.79px;top:528px;font-size:12px;font-weight:400;color:#333333;line-height:14px;letter-spacing:-0.383px;">чистотесаными</div>
<div class="t" style="left:812.59px;top:528px;font-size:12px;font-weight:400;color:#333333;line-height:14px;letter-spacing:-0.475px;">толщиной</div>
<div class="t" style="left:867.44px;top:528px;font-size:12px;font-weight:400;color:#333333;line-height:14px;transform-origin:0 0;transform:scaleX(0.9384);">100</div>
<div class="t" style="left:888.67px;top:528px;font-size:12px;font-weight:400;color:#333333;line-height:14px;letter-spacing:0.058px;">мм</div>
<div class="t" style="left:907.42px;top:528px;font-size:12px;font-weight:400;color:#333333;line-height:14px;transform-origin:0 0;transform:scaleX(0.939);">при</div>
<div class="t" style="left:928.49px;top:528px;font-size:12px;font-weight:400;color:#333333;line-height:14px;letter-spacing:-0.548px;">числе</div>
<div class="t" style="left:961.67px;top:528px;font-size:12px;font-weight:400;color:#333333;line-height:14px;letter-spacing:-0.522px;">плит</div>
<div class="t" style="left:988.97px;top:528px;font-size:12px;font-weight:400;color:#333333;line-height:14px;letter-spacing:0px;">в</div>
<div class="t" style="left:997.69px;top:528px;font-size:12px;font-weight:400;color:#333333;line-height:14px;letter-spacing:0px;">1</div>
<div class="t" style="left:528.17px;top:541px;font-size:12px;font-weight:400;color:#333333;line-height:14px;letter-spacing:0.598px;">м2</div>
<div class="t" style="left:545.48px;top:541px;font-size:12px;font-weight:400;color:#333333;line-height:14px;letter-spacing:-0.366px;">до</div>
<div class="t" style="left:561.09px;top:541px;font-size:12px;font-weight:400;color:#333333;line-height:14px;letter-spacing:0px;">6</div>
<div class="t" style="left:1028.59px;top:528px;font-size:12px;font-weight:400;color:#333333;line-height:14px;letter-spacing:-0.383px;">100 м2 поверхности</div>
<div class="t" style="left:1028.6px;top:541px;font-size:12px;font-weight:400;color:#333333;line-height:14px;letter-spacing:-0.19px;">облицовки</div>
<div class="t" style="left:1244.71px;top:528px;font-size:12px;color:#333333;line-height:14px;letter-spacing:-0.479px">17 293,89</div>
<svg style="left:504px;top:544px" width="11" height="11" viewBox="0 0 11 11"><rect x="-0.3" y="-0.6" width="10.9" height="11.2" rx="1.5" fill="#fff" opacity="0.7"/><rect x="0.9" y="0.5" width="8.6" height="9" fill="#fff" stroke="#7f63c8" stroke-width="1.1"/><path d="M0.6 0.5H9.5V9" stroke="#4a2aa6" stroke-width="1.1" fill="none"/><path d="M5.3 2.2V6.8M2.9 4.5H7.7" stroke="#4527a0" stroke-width="1.1"/></svg>
<div class="t" style="left:388.54px;top:564px;font-size:12px;color:#333333;line-height:14px;letter-spacing:-0.681px">3.15-1-10</div>
<div class="a" style="left:613.9px;top:565px;width:64.0px;height:13px;background:#ffa000;"></div>
<div class="a" style="left:680.9px;top:565px;width:45.2px;height:13px;background:#ffa000;"></div>
<div class="a" style="left:961.9px;top:565px;width:24.3px;height:13px;background:#ffa000;"></div>
<div class="t" style="left:528.83px;top:564px;font-size:12px;font-weight:400;color:#333333;line-height:14px;letter-spacing:-0.636px;">Облицовка</div>
<div class="t" style="left:588.59px;top:564px;font-size:12px;font-weight:400;color:#333333;line-height:14px;letter-spacing:-0.51px;">стен</div>
<div class="t" style="left:613.67px;top:564px;font-size:12px;font-weight:400;color:#333333;line-height:14px;letter-spacing:-0.256px;">гранитными</div>
<div class="t" style="left:680.67px;top:564px;font-size:12px;font-weight:400;color:#333333;line-height:14px;letter-spacing:-0.257px;">плитами</div>
<div class="t" style="left:728.79px;top:564px;font-size:12px;font-weight:400;color:#333333;line-height:14px;letter-spacing:-0.383px;">чистотесаными</div>
<div class="t" style="left:812.59px;top:564px;font-size:12px;font-weight:400;color:#333333;line-height:14px;letter-spacing:-0.475px;">толщиной</div>
<div class="t" style="left:867.44px;top:564px;font-size:12px;font-weight:400;color:#333333;line-height:14px;transform-origin:0 0;transform:scaleX(0.9384);">100</div>
<div class="t" style="left:888.67px;top:564px;font-size:12px;font-weight:400;color:#333333;line-height:14px;letter-spacing:0.058px;">мм</div>
<div class="t" style="left:907.42px;top:564px;font-size:12px;font-weight:400;color:#333333;line-height:14px;transform-origin:0 0;transform:scaleX(0.939);">при</div>
<div class="t" style="left:928.49px;top:564px;font-size:12px;font-weight:400;color:#333333;line-height:14px;letter-spacing:-0.548px;">числе</div>
<div class="t" style="left:961.67px;top:564px;font-size:12px;font-weight:400;color:#333333;line-height:14px;letter-spacing:-0.522px;">плит</div>
<div class="t" style="left:988.97px;top:564px;font-size:12px;font-weight:400;color:#333333;line-height:14px;letter-spacing:0px;">в</div>
<div class="t" style="left:997.69px;top:564px;font-size:12px;font-weight:400;color:#333333;line-height:14px;letter-spacing:0px;">1</div>
<div class="t" style="left:528.17px;top:577px;font-size:12px;font-weight:400;color:#333333;line-height:14px;letter-spacing:0.598px;">м2</div>
<div class="t" style="left:545.1px;top:577px;font-size:12px;font-weight:400;color:#333333;line-height:14px;letter-spacing:-0.626px;">более</div>
<div class="t" style="left:578.19px;top:577px;font-size:12px;font-weight:400;color:#333333;line-height:14px;letter-spacing:0px;">6</div>
<div class="t" style="left:1028.59px;top:564px;font-size:12px;font-weight:400;color:#333333;line-height:14px;letter-spacing:-0.383px;">100 м2 поверхности</div>
<div class="t" style="left:1028.6px;top:577px;font-size:12px;font-weight:400;color:#333333;line-height:14px;letter-spacing:-0.19px;">облицовки</div>
<div class="t" style="left:1244.61px;top:564px;font-size:12px;color:#333333;line-height:14px;letter-spacing:-0.479px">19 546,40</div>
<svg style="left:504px;top:580px" width="11" height="11" viewBox="0 0 11 11"><rect x="-0.3" y="-0.6" width="10.9" height="11.2" rx="1.5" fill="#fff" opacity="0.7"/><rect x="0.9" y="0.5" width="8.6" height="9" fill="#fff" stroke="#7f63c8" stroke-width="1.1"/><path d="M0.6 0.5H9.5V9" stroke="#4a2aa6" stroke-width="1.1" fill="none"/><path d="M5.3 2.2V6.8M2.9 4.5H7.7" stroke="#4527a0" stroke-width="1.1"/></svg>
<div class="t" style="left:388.54px;top:600px;font-size:12px;color:#333333;line-height:14px;letter-spacing:-0.681px">3.15-1-11</div>
<div class="a" style="left:613.9px;top:601px;width:64.0px;height:13px;background:#ffa000;"></div>
<div class="a" style="left:680.9px;top:601px;width:45.2px;height:13px;background:#ffa000;"></div>
<div class="t" style="left:528.83px;top:600px;font-size:12px;font-weight:400;color:#333333;line-height:14px;letter-spacing:-0.636px;">Облицовка</div>
<div class="t" style="left:588.59px;top:600px;font-size:12px;font-weight:400;color:#333333;line-height:14px;letter-spacing:-0.51px;">стен</div>
<div class="t" style="left:613.67px;top:600px;font-size:12px;font-weight:400;color:#333333;line-height:14px;letter-spacing:-0.256px;">гранитными</div>
<div class="t" style="left:680.67px;top:600px;font-size:12px;font-weight:400;color:#333333;line-height:14px;letter-spacing:-0.257px;">плитами</div>
<div class="t" style="left:728.99px;top:600px;font-size:12px;font-weight:400;color:#333333;line-height:14px;letter-spacing:0px;">с</div>
<div class="t" style="left:737.67px;top:600px;font-size:12px;font-weight:400;color:#333333;line-height:14px;letter-spacing:-0.432px;">поверхностью</div>
<div class="t" style="left:814.89px;top:600px;font-size:12px;font-weight:400;color:#333333;line-height:14px;letter-spacing:-0.719px;">"под</div>
<div class="t" style="left:840.09px;top:600px;font-size:12px;font-weight:400;color:#333333;line-height:14px;letter-spacing:-0.607px;">скалу"</div>
<div class="t" style="left:875.39px;top:600px;font-size:12px;font-weight:400;color:#333333;line-height:14px;letter-spacing:-0.446px;">толщиной</div>
<div class="t" style="left:930.26px;top:600px;font-size:12px;font-weight:400;color:#333333;line-height:14px;transform-origin:0 0;transform:scaleX(0.917);">150</div>
<div class="t" style="left:951.67px;top:600px;font-size:12px;font-weight:400;color:#333333;line-height:14px;letter-spacing:0.058px;">мм</div>
<div class="t" style="left:970.37px;top:600px;font-size:12px;font-weight:400;color:#333333;line-height:14px;letter-spacing:-0.305px;">при</div>
<div class="a" style="left:561.9px;top:614px;width:24.2px;height:13px;background:#ffa000;"></div>
<div class="t" style="left:528.29px;top:613px;font-size:12px;font-weight:400;color:#333333;line-height:14px;letter-spacing:-0.423px;">числе</div>
<div class="t" style="left:561.67px;top:613px;font-size:12px;font-weight:400;color:#333333;line-height:14px;letter-spacing:-0.555px;">плит</div>
<div class="t" style="left:588.37px;top:613px;font-size:12px;font-weight:400;color:#333333;line-height:14px;letter-spacing:0px;">в</div>
<div class="t" style="left:597.29px;top:613px;font-size:12px;font-weight:400;color:#333333;line-height:14px;letter-spacing:0px;">1</div>
<div class="t" style="left:606.37px;top:613px;font-size:12px;font-weight:400;color:#333333;line-height:14px;letter-spacing:0.098px;">м2</div>
<div class="t" style="left:623.69px;top:613px;font-size:12px;font-weight:400;color:#333333;line-height:14px;transform-origin:0 0;transform:scaleX(0.9413);">до</div>
<div class="t" style="left:638.9px;top:613px;font-size:12px;font-weight:400;color:#333333;line-height:14px;letter-spacing:0px;">2</div>
<div class="t" style="left:1028.59px;top:600px;font-size:12px;font-weight:400;color:#333333;line-height:14px;letter-spacing:-0.383px;">100 м2 поверхности</div>
<div class="t" style="left:1028.6px;top:613px;font-size:12px;font-weight:400;color:#333333;line-height:14px;letter-spacing:-0.19px;">облицовки</div>
<div class="t" style="left:1245.38px;top:600px;font-size:12px;color:#333333;line-height:14px;letter-spacing:-0.479px">11 643,64</div>
<svg style="left:504px;top:616px" width="11" height="11" viewBox="0 0 11 11"><rect x="-0.3" y="-0.6" width="10.9" height="11.2" rx="1.5" fill="#fff" opacity="0.7"/><rect x="0.9" y="0.5" width="8.6" height="9" fill="#fff" stroke="#7f63c8" stroke-width="1.1"/><path d="M0.6 0.5H9.5V9" stroke="#4a2aa6" stroke-width="1.1" fill="none"/><path d="M5.3 2.2V6.8M2.9 4.5H7.7" stroke="#4527a0" stroke-width="1.1"/></svg>
<div class="t" style="left:388.54px;top:636px;font-size:12px;color:#333333;line-height:14px;letter-spacing:-0.681px">3.15-1-12</div>
<div class="a" style="left:613.9px;top:637px;width:64.0px;height:13px;background:#ffa000;"></div>
<div class="a" style="left:680.9px;top:637px;width:45.2px;height:13px;background:#ffa000;"></div>
<div class="t" style="left:528.83px;top:636px;font-size:12px;font-weight:400;color:#333333;line-height:14px;letter-spacing:-0.636px;">Облицовка</div>
<div class="t" style="left:588.59px;top:636px;font-size:12px;font-weight:400;color:#333333;line-height:14px;letter-spacing:-0.51px;">стен</div>
<div class="t" style="left:613.67px;top:636px;font-size:12px;font-weight:400;color:#333333;line-height:14px;letter-spacing:-0.256px;">гранитными</div>
<div class="t" style="left:680.67px;top:636px;font-size:12px;font-weight:400;color:#333333;line-height:14px;letter-spacing:-0.257px;">плитами</div>
<div class="t" style="left:728.99px;top:636px;font-size:12px;font-weight:400;color:#333333;line-height:14px;letter-spacing:0px;">с</div>
<div class="t" style="left:737.67px;top:636px;font-size:12px;font-weight:400;color:#333333;line-height:14px;letter-spacing:-0.432px;">поверхностью</div>
<div class="t" style="left:814.89px;top:636px;font-size:12px;font-weight:400;color:#333333;line-height:14px;letter-spacing:-0.719px;">"под</div>
<div class="t" style="left:840.09px;top:636px;font-size:12px;font-weight:400;color:#333333;line-height:14px;letter-spacing:-0.607px;">скалу"</div>
<div class="t" style="left:875.39px;top:636px;font-size:12px;font-weight:400;color:#333333;line-height:14px;letter-spacing:-0.446px;">толщиной</div>
<div class="t" style="left:930.26px;top:636px;font-size:12px;font-weight:400;color:#333333;line-height:14px;transform-origin:0 0;transform:scaleX(0.917);">150</div>
<div class="t" style="left:951.67px;top:636px;font-size:12px;font-weight:400;color:#333333;line-height:14px;letter-spacing:0.058px;">мм</div>
<div class="t" style="left:970.37px;top:636px;font-size:12px;font-weight:400;color:#333333;line-height:14px;letter-spacing:-0.305px;">при</div>
<div class="a" style="left:561.9px;top:650px;width:24.2px;height:13px;background:#ffa000;"></div>
<div class="t" style="left:528.29px;top:649px;font-size:12px;font-weight:400;color:#333333;line-height:14px;letter-spacing:-0.423px;">числе</div>
<div class="t" style="left:561.67px;top:649px;font-size:12px;font-weight:400;color:#333333;line-height:14px;letter-spacing:-0.555px;">плит</div>
<div class="t" style="left:588.37px;top:649px;font-size:12px;font-weight:400;color:#333333;line-height:14px;letter-spacing:0px;">в</div>
<div class="t" style="left:597.29px;top:649px;font-size:12px;font-weight:400;color:#333333;line-height:14px;letter-spacing:0px;">1</div>
<div class="t" style="left:606.37px;top:649px;font-size:12px;font-weight:400;color:#333333;line-height:14px;letter-spacing:0.098px;">м2</div>
<div class="t" style="left:623.69px;top:649px;font-size:12px;font-weight:400;color:#333333;line-height:14px;transform-origin:0 0;transform:scaleX(0.9413);">до</div>
<div class="t" style="left:639.04px;top:649px;font-size:12px;font-weight:400;color:#333333;line-height:14px;letter-spacing:0px;">3</div>
<div class="t" style="left:1028.59px;top:636px;font-size:12px;font-weight:400;color:#333333;line-height:14px;letter-spacing:-0.383px;">100 м2 поверхности</div>
<div class="t" style="left:1028.6px;top:649px;font-size:12px;font-weight:400;color:#333333;line-height:14px;letter-spacing:-0.19px;">облицовки</div>
<div class="t" style="left:1244.49px;top:636px;font-size:12px;color:#333333;line-height:14px;letter-spacing:-0.479px">13 771,14</div>
<svg style="left:504px;top:652px" width="11" height="11" viewBox="0 0 11 11"><rect x="-0.3" y="-0.6" width="10.9" height="11.2" rx="1.5" fill="#fff" opacity="0.7"/><rect x="0.9" y="0.5" width="8.6" height="9" fill="#fff" stroke="#7f63c8" stroke-width="1.1"/><path d="M0.6 0.5H9.5V9" stroke="#4a2aa6" stroke-width="1.1" fill="none"/><path d="M5.3 2.2V6.8M2.9 4.5H7.7" stroke="#4527a0" stroke-width="1.1"/></svg>
<div class="t" style="left:388.54px;top:672px;font-size:12px;color:#333333;line-height:14px;letter-spacing:-0.681px">3.15-1-13</div>
<div class="a" style="left:613.9px;top:673px;width:64.0px;height:13px;background:#ffa000;"></div>
<div class="a" style="left:680.9px;top:673px;width:45.2px;height:13px;background:#ffa000;"></div>
<div class="t" style="left:528.83px;top:672px;font-size:12px;font-weight:400;color:#333333;line-height:14px;letter-spacing:-0.636px;">Облицовка</div>
<div class="t" style="left:588.59px;top:672px;font-size:12px;font-weight:400;color:#333333;line-height:14px;letter-spacing:-0.51px;">стен</div>
<div class="t" style="left:613.67px;top:672px;font-size:12px;font-weight:400;color:#333333;line-height:14px;letter-spacing:-0.256px;">гранитными</div>
<div class="t" style="left:680.67px;top:672px;font-size:12px;font-weight:400;color:#333333;line-height:14px;letter-spacing:-0.257px;">плитами</div>
<div class="t" style="left:728.99px;top:672px;font-size:12px;font-weight:400;color:#333333;line-height:14px;letter-spacing:0px;">с</div>
<div class="t" style="left:737.67px;top:672px;font-size:12px;font-weight:400;color:#333333;line-height:14px;letter-spacing:-0.432px;">поверхностью</div>
<div class="t" style="left:814.89px;top:672px;font-size:12px;font-weight:400;color:#333333;line-height:14px;letter-spacing:-0.719px;">"под</div>
<div class="t" style="left:840.09px;top:672px;font-size:12px;font-weight:400;color:#333333;line-height:14px;letter-spacing:-0.607px;">скалу"</div>
<div class="t" style="left:875.39px;top:672px;font-size:12px;font-weight:400;color:#333333;line-height:14px;letter-spacing:-0.446px;">толщиной</div>
<div class="t" style="left:930.26px;top:672px;font-size:12px;font-weight:400;color:#333333;line-height:14px;transform-origin:0 0;transform:scaleX(0.917);">150</div>
<div class="t" style="left:951.67px;top:672px;font-size:12px;font-weight:400;color:#333333;line-height:14px;letter-spacing:0.058px;">мм</div>
<div class="t" style="left:970.37px;top:672px;font-size:12px;font-weight:400;color:#333333;line-height:14px;letter-spacing:-0.305px;">при</div>
<div class="a" style="left:561.9px;top:686px;width:24.2px;height:13px;background:#ffa000;"></div>
<div class="t" style="left:528.29px;top:685px;font-size:12px;font-weight:400;color:#333333;line-height:14px;letter-spacing:-0.423px;">числе</div>
<div class="t" style="left:561.67px;top:685px;font-size:12px;font-weight:400;color:#333333;line-height:14px;letter-spacing:-0.555px;">плит</div>
<div class="t" style="left:588.37px;top:685px;font-size:12px;font-weight:400;color:#333333;line-height:14px;letter-spacing:0px;">в</div>
<div class="t" style="left:597.29px;top:685px;font-size:12px;font-weight:400;color:#333333;line-height:14px;letter-spacing:0px;">1</div>
<div class="t" style="left:606.37px;top:685px;font-size:12px;font-weight:400;color:#333333;line-height:14px;letter-spacing:0.098px;">м2</div>
<div class="t" style="left:623.69px;top:685px;font-size:12px;font-weight:400;color:#333333;line-height:14px;transform-origin:0 0;transform:scaleX(0.9413);">до</div>
<div class="t" style="left:639.22px;top:685px;font-size:12px;font-weight:400;color:#333333;line-height:14px;letter-spacing:0px;">4</div>
<div class="t" style="left:1028.59px;top:672px;font-size:12px;font-weight:400;color:#333333;line-height:14px;letter-spacing:-0.383px;">100 м2 поверхности</div>
<div class="t" style="left:1028.6px;top:685px;font-size:12px;font-weight:400;color:#333333;line-height:14px;letter-spacing:-0.19px;">облицовки</div>
<div class="t" style="left:1244.74px;top:672px;font-size:12px;color:#333333;line-height:14px;letter-spacing:-0.479px">15 616,67</div>
<svg style="left:504px;top:688px" width="11" height="11" viewBox="0 0 11 11"><rect x="-0.3" y="-0.6" width="10.9" height="11.2" rx="1.5" fill="#fff" opacity="0.7"/><rect x="0.9" y="0.5" width="8.6" height="9" fill="#fff" stroke="#7f63c8" stroke-width="1.1"/><path d="M0.6 0.5H9.5V9" stroke="#4a2aa6" stroke-width="1.1" fill="none"/><path d="M5.3 2.2V6.8M2.9 4.5H7.7" stroke="#4527a0" stroke-width="1.1"/></svg>
<div class="t" style="left:388.54px;top:708px;font-size:12px;color:#333333;line-height:14px;letter-spacing:-0.681px">3.15-1-14</div>
<div class="a" style="left:613.9px;top:709px;width:64.0px;height:13px;background:#ffa000;"></div>
<div class="a" style="left:680.9px;top:709px;width:45.2px;height:13px;background:#ffa000;"></div>
<div class="t" style="left:528.83px;top:708px;font-size:12px;font-weight:400;color:#333333;line-height:14px;letter-spacing:-0.636px;">Облицовка</div>
<div class="t" style="left:588.59px;top:708px;font-size:12px;font-weight:400;color:#333333;line-height:14px;letter-spacing:-0.51px;">стен</div>
<div class="t" style="left:613.67px;top:708px;font-size:12px;font-weight:400;color:#333333;line-height:14px;letter-spacing:-0.256px;">гранитными</div>
<div class="t" style="left:680.67px;top:708px;font-size:12px;font-weight:400;color:#333333;line-height:14px;letter-spacing:-0.257px;">плитами</div>
<div class="t" style="left:728.99px;top:708px;font-size:12px;font-weight:400;color:#333333;line-height:14px;letter-spacing:0px;">с</div>
<div class="t" style="left:737.67px;top:708px;font-size:12px;font-weight:400;color:#333333;line-height:14px;letter-spacing:-0.432px;">поверхностью</div>
<div class="t" style="left:814.89px;top:708px;font-size:12px;font-weight:400;color:#333333;line-height:14px;letter-spacing:-0.719px;">"под</div>
<div class="t" style="left:840.09px;top:708px;font-size:12px;font-weight:400;color:#333333;line-height:14px;letter-spacing:-0.607px;">скалу"</div>
<div class="t" style="left:875.39px;top:708px;font-size:12px;font-weight:400;color:#333333;line-height:14px;letter-spacing:-0.446px;">толщиной</div>
<div class="t" style="left:930.26px;top:708px;font-size:12px;font-weight:400;color:#333333;line-height:14px;transform-origin:0 0;transform:scaleX(0.917);">150</div>
<div class="t" style="left:951.67px;top:708px;font-size:12px;font-weight:400;color:#333333;line-height:14px;letter-spacing:0.058px;">мм</div>
<div class="t" style="left:970.37px;top:708px;font-size:12px;font-weight:400;color:#333333;line-height:14px;letter-spacing:-0.305px;">при</div>
<div class="a" style="left:561.9px;top:722px;width:24.2px;height:13px;background:#ffa000;"></div>
<div class="t" style="left:528.29px;top:721px;font-size:12px;font-weight:400;color:#333333;line-height:14px;letter-spacing:-0.423px;">числе</div>
<div class="t" style="left:561.67px;top:721px;font-size:12px;font-weight:400;color:#333333;line-height:14px;letter-spacing:-0.555px;">плит</div>
<div class="t" style="left:588.37px;top:721px;font-size:12px;font-weight:400;color:#333333;line-height:14px;letter-spacing:0px;">в</div>
<div class="t" style="left:597.29px;top:721px;font-size:12px;font-weight:400;color:#333333;line-height:14px;letter-spacing:0px;">1</div>
<div class="t" style="left:606.37px;top:721px;font-size:12px;font-weight:400;color:#333333;line-height:14px;letter-spacing:0.098px;">м2</div>
<div class="t" style="left:623.69px;top:721px;font-size:12px;font-weight:400;color:#333333;line-height:14px;transform-origin:0 0;transform:scaleX(0.9413);">до</div>
<div class="t" style="left:638.89px;top:721px;font-size:12px;font-weight:400;color:#333333;line-height:14px;letter-spacing:0px;">6</div>
<div class="t" style="left:1028.59px;top:708px;font-size:12px;font-weight:400;color:#333333;line-height:14px;letter-spacing:-0.383px;">100 м2 поверхности</div>
<div class="t" style="left:1028.6px;top:721px;font-size:12px;font-weight:400;color:#333333;line-height:14px;letter-spacing:-0.19px;">облицовки</div>
<div class="t" style="left:1244.66px;top:708px;font-size:12px;color:#333333;line-height:14px;letter-spacing:-0.479px">17 733,18</div>
<svg style="left:504px;top:724px" width="11" height="11" viewBox="0 0 11 11"><rect x="-0.3" y="-0.6" width="10.9" height="11.2" rx="1.5" fill="#fff" opacity="0.7"/><rect x="0.9" y="0.5" width="8.6" height="9" fill="#fff" stroke="#7f63c8" stroke-width="1.1"/><path d="M0.6 0.5H9.5V9" stroke="#4a2aa6" stroke-width="1.1" fill="none"/><path d="M5.3 2.2V6.8M2.9 4.5H7.7" stroke="#4527a0" stroke-width="1.1"/></svg>
<div class="t" style="left:388.54px;top:744px;font-size:12px;color:#333333;line-height:14px;letter-spacing:-0.681px">3.15-1-15</div>
<div class="a" style="left:613.9px;top:745px;width:64.0px;height:13px;background:#ffa000;"></div>
<div class="a" style="left:680.9px;top:745px;width:45.2px;height:13px;background:#ffa000;"></div>
<div class="t" style="left:528.83px;top:744px;font-size:12px;font-weight:400;color:#333333;line-height:14px;letter-spacing:-0.636px;">Облицовка</div>
<div class="t" style="left:588.59px;top:744px;font-size:12px;font-weight:400;color:#333333;line-height:14px;letter-spacing:-0.51px;">стен</div>
<div class="t" style="left:613.67px;top:744px;font-size:12px;font-weight:400;color:#333333;line-height:14px;letter-spacing:-0.256px;">гранитными</div>
<div class="t" style="left:680.67px;top:744px;font-size:12px;font-weight:400;color:#333333;line-height:14px;letter-spacing:-0.257px;">плитами</div>
<div class="t" style="left:728.99px;top:744px;font-size:12px;font-weight:400;color:#333333;line-height:14px;letter-spacing:0px;">с</div>
<div class="t" style="left:737.67px;top:744px;font-size:12px;font-weight:400;color:#333333;line-height:14px;letter-spacing:-0.432px;">поверхностью</div>
<div class="t" style="left:814.89px;top:744px;font-size:12px;font-weight:400;color:#333333;line-height:14px;letter-spacing:-0.719px;">"под</div>
<div class="t" style="left:840.09px;top:744px;font-size:12px;font-weight:400;color:#333333;line-height:14px;letter-spacing:-0.607px;">скалу"</div>
<div class="t" style="left:875.39px;top:744px;font-size:12px;font-weight:400;color:#333333;line-height:14px;letter-spacing:-0.446px;">толщиной</div>
<div class="t" style="left:930.26px;top:744px;font-size:12px;font-weight:400;color:#333333;line-height:14px;transform-origin:0 0;transform:scaleX(0.917);">150</div>
<div class="t" style="left:951.67px;top:744px;font-size:12px;font-weight:400;color:#333333;line-height:14px;letter-spacing:0.058px;">мм</div>
<div class="t" style="left:970.37px;top:744px;font-size:12px;font-weight:400;color:#333333;line-height:14px;letter-spacing:-0.305px;">при</div>
<div class="a" style="left:561.9px;top:758px;width:24.2px;height:13px;background:#ffa000;"></div>
<div class="t" style="left:528.29px;top:757px;font-size:12px;font-weight:400;color:#333333;line-height:14px;letter-spacing:-0.423px;">числе</div>
<div class="t" style="left:561.67px;top:757px;font-size:12px;font-weight:400;color:#333333;line-height:14px;letter-spacing:-0.555px;">плит</div>
<div class="t" style="left:588.37px;top:757px;font-size:12px;font-weight:400;color:#333333;line-height:14px;letter-spacing:0px;">в</div>
<div class="t" style="left:597.29px;top:757px;font-size:12px;font-weight:400;color:#333333;line-height:14px;letter-spacing:0px;">1</div>
<div class="t" style="left:606.37px;top:757px;font-size:12px;font-weight:400;color:#333333;line-height:14px;letter-spacing:0.098px;">м2</div>
<div class="t" style="left:623.3px;top:757px;font-size:12px;font-weight:400;color:#333333;line-height:14px;letter-spacing:-0.626px;">более</div>
<div class="t" style="left:656.39px;top:757px;font-size:12px;font-weight:400;color:#333333;line-height:14px;letter-spacing:0px;">6</div>
<div class="t" style="left:1028.59px;top:744px;font-size:12px;font-weight:400;color:#333333;line-height:14px;letter-spacing:-0.383px;">100 м2 поверхности</div>
<div class="t" style="left:1028.6px;top:757px;font-size:12px;font-weight:400;color:#333333;line-height:14px;letter-spacing:-0.19px;">облицовки</div>
<div class="t" style="left:1244.65px;top:744px;font-size:12px;color:#333333;line-height:14px;letter-spacing:-0.479px">19 840,45</div>
<svg style="left:504px;top:760px" width="11" height="11" viewBox="0 0 11 11"><rect x="-0.3" y="-0.6" width="10.9" height="11.2" rx="1.5" fill="#fff" opacity="0.7"/><rect x="0.9" y="0.5" width="8.6" height="9" fill="#fff" stroke="#7f63c8" stroke-width="1.1"/><path d="M0.6 0.5H9.5V9" stroke="#4a2aa6" stroke-width="1.1" fill="none"/><path d="M5.3 2.2V6.8M2.9 4.5H7.7" stroke="#4527a0" stroke-width="1.1"/></svg>
<div class="a" style="left:1373.5px;top:212px;width:5.5px;height:79px;background:#a994d6;border-radius:3px;"></div>
<div class="a" style="left:1019px;top:782px;width:361px;height:1px;background:#d1c4e9;"></div>
<div class="a" style="left:1019px;top:777px;width:150px;height:5.5px;background:#a994d6;border-radius:3px;"></div>
<div class="a" style="left:1018px;top:794px;width:376px;height:1px;background:#d1c4e9;"></div>
<div class="a" style="left:1018px;top:794px;width:1px;height:6px;background:#d1c4e9;"></div>
<div class="a" style="left:1392.3px;top:782.3px;width:2.6px;height:2.6px;background:#9a9a9a;border-radius:50%;"></div>
<div class="a" style="left:1387.3px;top:787.3px;width:2.6px;height:2.6px;background:#9a9a9a;border-radius:50%;"></div>
<div class="a" style="left:1392.3px;top:787.3px;width:2.6px;height:2.6px;background:#9a9a9a;border-radius:50%;"></div>
<div class="a" style="left:1382.3px;top:792.3px;width:2.6px;height:2.6px;background:#9a9a9a;border-radius:50%;"></div>
<div class="a" style="left:1387.3px;top:792.3px;width:2.6px;height:2.6px;background:#9a9a9a;border-radius:50%;"></div>
<div class="a" style="left:1392.3px;top:792.3px;width:2.6px;height:2.6px;background:#9a9a9a;border-radius:50%;"></div>
<svg style="left:46px;top:111px" width="12" height="15" viewBox="46 111 12 15">
<rect x="46.5" y="111.7" width="11" height="13.8" rx="1" fill="#fff" stroke="#bdbdbd" stroke-width="0.9"/>
<rect x="48" y="113" width="8" height="1.6" fill="#a8a8a8"/>
<rect x="48" y="115.7" width="8" height="0.9" fill="#7e57c2"/>
<rect x="48" y="117" width="8" height="4.6" fill="#d9d4e6"/>
<path d="M50.6 117V121.6M53.3 117V121.6M48 119.3H56" stroke="#f3f0fa" stroke-width="0.6"/>
<rect x="48" y="123" width="3.8" height="0.9" fill="#d0d0d0"/><rect x="53" y="123" width="3" height="0.9" fill="#9a9a9a"/>
</svg>
<svg style="left:40px;top:146px" width="12" height="12" viewBox="0 0 12 12"><path d="M0.3 0H11.5L6.9 5.8V11H4.9V5.8Z" fill="#4a2aa6"/></svg>
<svg style="left:299px;top:144px" width="12" height="14" viewBox="0 0 12 14"><path d="M6 13V1.6M1.4 6.2L6 1.6L10.6 6.2" stroke="#e6e6e6" stroke-width="1.8" fill="none"/></svg>
<svg style="left:325px;top:144px" width="12" height="14" viewBox="0 0 12 14"><path d="M6 1V12.4M1.4 7.8L6 12.4L10.6 7.8" stroke="#e6e6e6" stroke-width="1.8" fill="none"/></svg>
<svg style="left:353px;top:145px" width="12" height="12" viewBox="0 0 12 12"><path d="M5.6 0.4L0.8 6L5.6 11.6M11.2 0.4L6.4 6L11.2 11.6" stroke="#5e3bb5" stroke-width="1.1" fill="none"/></svg>
<svg style="left:44px;top:190.2px" width="10" height="6" viewBox="0 0 10 6"><path d="M0.6 0.7L4.45 4.3L8.3 0.7" stroke="#111" stroke-width="1.6" fill="none"/></svg>
<svg style="left:74.6px;top:181px" width="17" height="18" viewBox="0 0 17 18"><rect x="0.2" y="0" width="5.2" height="15.9" fill="#512da8"/><rect x="0.5" y="2.2" width="4.6" height="2.2" fill="#7a7a7a"/><rect x="0.5" y="4.4" width="4.6" height="2.2" fill="#9a9a9a"/><rect x="0.5" y="6.6" width="4.6" height="2.1" fill="#fff"/><circle cx="2.8" cy="13" r="1" fill="#ece6f8"/><rect x="5.85" y="0" width="5.2" height="15.9" fill="#f2c230"/><rect x="6.15" y="2.2" width="4.6" height="2.2" fill="#7a7a7a"/><rect x="6.15" y="4.4" width="4.6" height="2.2" fill="#9a9a9a"/><rect x="6.15" y="6.6" width="4.6" height="2.1" fill="#fff"/><circle cx="8.45" cy="13" r="1" fill="#ece6f8"/><rect x="11.5" y="0" width="5.2" height="15.9" fill="#512da8"/><rect x="11.8" y="2.2" width="4.6" height="2.2" fill="#7a7a7a"/><rect x="11.8" y="4.4" width="4.6" height="2.2" fill="#9a9a9a"/><rect x="11.8" y="6.6" width="4.6" height="2.1" fill="#fff"/><circle cx="14.1" cy="13" r="1" fill="#ece6f8"/><rect x="-0.2" y="15.9" width="17.2" height="1.7" fill="#e6b35a"/></svg>
<div class="t" style="left:97.83px;top:184px;font-size:12px;font-weight:400;color:#212121;line-height:14px;letter-spacing:-0.581px;">ТСН-2001 (МГЭ) (207)</div>
<svg style="left:62px;top:225.2px" width="10" height="6" viewBox="0 0 10 6"><path d="M0.6 0.7L4.45 4.3L8.3 0.7" stroke="#111" stroke-width="1.6" fill="none"/></svg>
<svg style="left:92.8px;top:216px" width="16" height="18" viewBox="0 0 16 18"><rect x="0" y="0" width="15.4" height="18" rx="1.3" fill="#512da8"/>
<rect x="1.6" y="4.2" width="12.5" height="5.8" rx="1.2" fill="#f1eef8"/><rect x="3" y="5.5" width="9.6" height="3.2" fill="#9a9a9a"/>
<rect x="2.4" y="1.4" width="1.8" height="1.4" fill="#d8cff0"/><rect x="2.4" y="14.2" width="2.4" height="1" fill="#fff"/></svg>
<div class="t" style="left:115.32px;top:219px;font-size:12px;font-weight:400;color:#212121;line-height:14px;letter-spacing:-0.315px;">Нормативы (207)</div>
<svg style="left:80.2px;top:260.2px" width="10" height="6" viewBox="0 0 10 6"><path d="M0.6 0.7L4.45 4.3L8.3 0.7" stroke="#111" stroke-width="1.6" fill="none"/></svg>
<svg style="left:111px;top:251.5px" width="16" height="17" viewBox="0 0 16 17"><path d="M15.5 2.2V15.4Q15.5 17 13.9 17H2.5" stroke="#5a5a5a" stroke-width="0.7" fill="none" opacity="0.75"/>
<rect x="0.2" y="0" width="14.9" height="16.5" rx="2" fill="#512da8"/><rect x="1.2" y="1.2" width="1.3" height="14" fill="#7253c6"/>
<rect x="3.9" y="1.3" width="9.8" height="1.2" fill="#fff"/><rect x="3.9" y="3.5" width="9.8" height="8.6" fill="#fff"/>
<rect x="4.8" y="4.6" width="8.2" height="4.9" fill="#bdbdbd"/><rect x="4.8" y="7" width="8.2" height="1.5" fill="#8a8a8a"/><rect x="4.8" y="4.6" width="8.2" height="0.9" fill="#9c9c9c"/>
<rect x="3.9" y="13.5" width="9.8" height="1.3" fill="#fff"/></svg>
<div class="t" style="left:134.11px;top:254px;font-size:12px;font-weight:400;color:#212121;line-height:14px;letter-spacing:-0.431px;">Дополнение 75 (207)</div>
<svg style="left:98px;top:295.5px" width="10" height="6" viewBox="0 0 10 6"><path d="M0.6 0.7L4.45 4.3L8.3 0.7" stroke="#111" stroke-width="1.6" fill="none"/></svg>
<svg style="left:128px;top:283px" width="19" height="17" viewBox="0 0 19 17"><path d="M0.8 0H6.4Q7.2 0 7.8 0.6L9 1.8H17.2Q18 1.8 18 2.6V4.2H0V0.8Q0 0 0.8 0Z" fill="#a67c2e"/>
<path d="M0 3.6H18V16Q18 16.8 17.2 16.8H0.8Q0 16.8 0 16Z" fill="#e6b35a"/></svg>
<div class="t" style="left:151.72px;top:282px;font-size:12px;font-weight:400;color:#212121;line-height:14px;letter-spacing:-0.458px;">Глава  3. Сборники норм и расценок</div>
<div class="t" style="left:151.87px;top:296px;font-size:12px;font-weight:400;color:#212121;line-height:14px;letter-spacing:-0.439px;">на строительные работы (147)</div>
<svg style="left:147px;top:321.2px" width="16" height="18" viewBox="0 0 16 18"><rect x="0.5" y="0.5" width="14.8" height="16.9" rx="1" fill="#fff" stroke="#bcbcbc" stroke-width="1"/>
<rect x="2.1" y="2.2" width="11.7" height="1.6" fill="#c6c6c6"/>
<rect x="2.1" y="4.8" width="11.5" height="8.9" rx="1" fill="#b7a3e2"/>
<rect x="3.4" y="5.9" width="5.6" height="1.1" fill="#fff"/><rect x="10" y="5.9" width="2.6" height="1.1" fill="#fff"/>
<rect x="3.4" y="8" width="5.6" height="1.2" fill="#fff"/><rect x="10" y="8" width="2.6" height="1.2" fill="#fff"/>
<rect x="3.4" y="10.1" width="5.6" height="1.1" fill="#fff"/><rect x="10" y="10.1" width="2.6" height="1.1" fill="#fff"/>
<path d="M2.6 7.5H13.2M2.6 9.65H13.2" stroke="#6a45bd" stroke-width="0.8"/><path d="M9.5 5.6V12.6" stroke="#5a35b5" stroke-width="0.9"/>
<rect x="3" y="15.1" width="4.6" height="0.9" fill="#c8c8c8"/><rect x="9.3" y="15.1" width="4" height="0.9" fill="#d2d2d2"/></svg>
<div class="t" style="left:169.89px;top:324px;font-size:12px;font-weight:400;color:#212121;line-height:14px;letter-spacing:-0.416px;">Сборник 11. Полы (14)</div>
<svg style="left:147px;top:354.2px" width="16" height="18" viewBox="0 0 16 18"><rect x="0.5" y="0.5" width="14.8" height="16.9" rx="1" fill="#fff" stroke="#bcbcbc" stroke-width="1"/>
<rect x="2.1" y="2.2" width="11.7" height="1.6" fill="#c6c6c6"/>
<rect x="2.1" y="4.8" width="11.5" height="8.9" rx="1" fill="#b7a3e2"/>
<rect x="3.4" y="5.9" width="5.6" height="1.1" fill="#fff"/><rect x="10" y="5.9" width="2.6" height="1.1" fill="#fff"/>
<rect x="3.4" y="8" width="5.6" height="1.2" fill="#fff"/><rect x="10" y="8" width="2.6" height="1.2" fill="#fff"/>
<rect x="3.4" y="10.1" width="5.6" height="1.1" fill="#fff"/><rect x="10" y="10.1" width="2.6" height="1.1" fill="#fff"/>
<path d="M2.6 7.5H13.2M2.6 9.65H13.2" stroke="#6a45bd" stroke-width="0.8"/><path d="M9.5 5.6V12.6" stroke="#5a35b5" stroke-width="0.9"/>
<rect x="3" y="15.1" width="4.6" height="0.9" fill="#c8c8c8"/><rect x="9.3" y="15.1" width="4" height="0.9" fill="#d2d2d2"/></svg>
<div class="t" style="left:169.89px;top:353px;font-size:12px;font-weight:400;color:#212121;line-height:14px;letter-spacing:-0.497px;">Сборник 15. Отделочные работы</div>
<div class="t" style="left:169.76px;top:367px;font-size:12px;font-weight:400;color:#212121;line-height:14px;letter-spacing:0.038px;">(111)</div>
<svg style="left:147px;top:390.2px" width="16" height="18" viewBox="0 0 16 18"><rect x="0.5" y="0.5" width="14.8" height="16.9" rx="1" fill="#fff" stroke="#bcbcbc" stroke-width="1"/>
<rect x="2.1" y="2.2" width="11.7" height="1.6" fill="#c6c6c6"/>
<rect x="2.1" y="4.8" width="11.5" height="8.9" rx="1" fill="#b7a3e2"/>
<rect x="3.4" y="5.9" width="5.6" height="1.1" fill="#fff"/><rect x="10" y="5.9" width="2.6" height="1.1" fill="#fff"/>
<rect x="3.4" y="8" width="5.6" height="1.2" fill="#fff"/><rect x="10" y="8" width="2.6" height="1.2" fill="#fff"/>
<rect x="3.4" y="10.1" width="5.6" height="1.1" fill="#fff"/><rect x="10" y="10.1" width="2.6" height="1.1" fill="#fff"/>
<path d="M2.6 7.5H13.2M2.6 9.65H13.2" stroke="#6a45bd" stroke-width="0.8"/><path d="M9.5 5.6V12.6" stroke="#5a35b5" stroke-width="0.9"/>
<rect x="3" y="15.1" width="4.6" height="0.9" fill="#c8c8c8"/><rect x="9.3" y="15.1" width="4" height="0.9" fill="#d2d2d2"/></svg>
<div class="t" style="left:169.89px;top:389px;font-size:12px;font-weight:400;color:#212121;line-height:14px;letter-spacing:-0.455px;">Сборник 27. Автомобильные</div>
<div class="t" style="left:170.38px;top:403px;font-size:12px;font-weight:400;color:#212121;line-height:14px;letter-spacing:-0.392px;">дороги (13)</div>
<svg style="left:147px;top:426.2px" width="16" height="18" viewBox="0 0 16 18"><rect x="0.5" y="0.5" width="14.8" height="16.9" rx="1" fill="#fff" stroke="#bcbcbc" stroke-width="1"/>
<rect x="2.1" y="2.2" width="11.7" height="1.6" fill="#c6c6c6"/>
<rect x="2.1" y="4.8" width="11.5" height="8.9" rx="1" fill="#b7a3e2"/>
<rect x="3.4" y="5.9" width="5.6" height="1.1" fill="#fff"/><rect x="10" y="5.9" width="2.6" height="1.1" fill="#fff"/>
<rect x="3.4" y="8" width="5.6" height="1.2" fill="#fff"/><rect x="10" y="8" width="2.6" height="1.2" fill="#fff"/>
<rect x="3.4" y="10.1" width="5.6" height="1.1" fill="#fff"/><rect x="10" y="10.1" width="2.6" height="1.1" fill="#fff"/>
<path d="M2.6 7.5H13.2M2.6 9.65H13.2" stroke="#6a45bd" stroke-width="0.8"/><path d="M9.5 5.6V12.6" stroke="#5a35b5" stroke-width="0.9"/>
<rect x="3" y="15.1" width="4.6" height="0.9" fill="#c8c8c8"/><rect x="9.3" y="15.1" width="4" height="0.9" fill="#d2d2d2"/></svg>
<div class="t" style="left:169.89px;top:425px;font-size:12px;font-weight:400;color:#212121;line-height:14px;letter-spacing:-0.466px;">Сборник 29. Тоннели и</div>
<div class="t" style="left:169.67px;top:439px;font-size:12px;font-weight:400;color:#212121;line-height:14px;letter-spacing:-0.369px;">метрополитены (1)</div>
<svg style="left:147px;top:462.2px" width="16" height="18" viewBox="0 0 16 18"><rect x="0.5" y="0.5" width="14.8" height="16.9" rx="1" fill="#fff" stroke="#bcbcbc" stroke-width="1"/>
<rect x="2.1" y="2.2" width="11.7" height="1.6" fill="#c6c6c6"/>
<rect x="2.1" y="4.8" width="11.5" height="8.9" rx="1" fill="#b7a3e2"/>
<rect x="3.4" y="5.9" width="5.6" height="1.1" fill="#fff"/><rect x="10" y="5.9" width="2.6" height="1.1" fill="#fff"/>
<rect x="3.4" y="8" width="5.6" height="1.2" fill="#fff"/><rect x="10" y="8" width="2.6" height="1.2" fill="#fff"/>
<rect x="3.4" y="10.1" width="5.6" height="1.1" fill="#fff"/><rect x="10" y="10.1" width="2.6" height="1.1" fill="#fff"/>
<path d="M2.6 7.5H13.2M2.6 9.65H13.2" stroke="#6a45bd" stroke-width="0.8"/><path d="M9.5 5.6V12.6" stroke="#5a35b5" stroke-width="0.9"/>
<rect x="3" y="15.1" width="4.6" height="0.9" fill="#c8c8c8"/><rect x="9.3" y="15.1" width="4" height="0.9" fill="#d2d2d2"/></svg>
<div class="t" style="left:169.89px;top:461px;font-size:12px;font-weight:400;color:#212121;line-height:14px;letter-spacing:-0.451px;">Сборник 42. Берегоукрепительные</div>
<div class="t" style="left:169.73px;top:475px;font-size:12px;font-weight:400;color:#212121;line-height:14px;letter-spacing:-0.428px;">работы (8)</div>
<svg style="left:98px;top:511.0px" width="10" height="6" viewBox="0 0 10 6"><path d="M0.6 0.7L4.45 4.3L8.3 0.7" stroke="#111" stroke-width="1.6" fill="none"/></svg>
<svg style="left:128px;top:499px" width="19" height="17" viewBox="0 0 19 17"><path d="M0.8 0H6.4Q7.2 0 7.8 0.6L9 1.8H17.2Q18 1.8 18 2.6V4.2H0V0.8Q0 0 0.8 0Z" fill="#a67c2e"/>
<path d="M0 3.6H18V16Q18 16.8 17.2 16.8H0.8Q0 16.8 0 16Z" fill="#e6b35a"/></svg>
<div class="t" style="left:151.72px;top:498px;font-size:12px;font-weight:400;color:#212121;line-height:14px;letter-spacing:-0.455px;">Глава  6. Сборники норм и расценок</div>
<div class="t" style="left:151.87px;top:512px;font-size:12px;font-weight:400;color:#212121;line-height:14px;letter-spacing:-0.424px;">на ремонтно-строительные работы (7)</div>
<svg style="left:147px;top:537.2px" width="16" height="18" viewBox="0 0 16 18"><rect x="0.5" y="0.5" width="14.8" height="16.9" rx="1" fill="#fff" stroke="#bcbcbc" stroke-width="1"/>
<rect x="2.1" y="2.2" width="11.7" height="1.6" fill="#c6c6c6"/>
<rect x="2.1" y="4.8" width="11.5" height="8.9" rx="1" fill="#b7a3e2"/>
<rect x="3.4" y="5.9" width="5.6" height="1.1" fill="#fff"/><rect x="10" y="5.9" width="2.6" height="1.1" fill="#fff"/>
<rect x="3.4" y="8" width="5.6" height="1.2" fill="#fff"/><rect x="10" y="8" width="2.6" height="1.2" fill="#fff"/>
<rect x="3.4" y="10.1" width="5.6" height="1.1" fill="#fff"/><rect x="10" y="10.1" width="2.6" height="1.1" fill="#fff"/>
<path d="M2.6 7.5H13.2M2.6 9.65H13.2" stroke="#6a45bd" stroke-width="0.8"/><path d="M9.5 5.6V12.6" stroke="#5a35b5" stroke-width="0.9"/>
<rect x="3" y="15.1" width="4.6" height="0.9" fill="#c8c8c8"/><rect x="9.3" y="15.1" width="4" height="0.9" fill="#d2d2d2"/></svg>
<div class="t" style="left:169.89px;top:540px;font-size:12px;font-weight:400;color:#212121;line-height:14px;letter-spacing:-0.427px;">Сборник 54. Перекрытия (1)</div>
<svg style="left:147px;top:570.2px" width="16" height="18" viewBox="0 0 16 18"><rect x="0.5" y="0.5" width="14.8" height="16.9" rx="1" fill="#fff" stroke="#bcbcbc" stroke-width="1"/>
<rect x="2.1" y="2.2" width="11.7" height="1.6" fill="#c6c6c6"/>
<rect x="2.1" y="4.8" width="11.5" height="8.9" rx="1" fill="#b7a3e2"/>
<rect x="3.4" y="5.9" width="5.6" height="1.1" fill="#fff"/><rect x="10" y="5.9" width="2.6" height="1.1" fill="#fff"/>
<rect x="3.4" y="8" width="5.6" height="1.2" fill="#fff"/><rect x="10" y="8" width="2.6" height="1.2" fill="#fff"/>
<rect x="3.4" y="10.1" width="5.6" height="1.1" fill="#fff"/><rect x="10" y="10.1" width="2.6" height="1.1" fill="#fff"/>
<path d="M2.6 7.5H13.2M2.6 9.65H13.2" stroke="#6a45bd" stroke-width="0.8"/><path d="M9.5 5.6V12.6" stroke="#5a35b5" stroke-width="0.9"/>
<rect x="3" y="15.1" width="4.6" height="0.9" fill="#c8c8c8"/><rect x="9.3" y="15.1" width="4" height="0.9" fill="#d2d2d2"/></svg>
<div class="t" style="left:169.89px;top:569px;font-size:12px;font-weight:400;color:#212121;line-height:14px;letter-spacing:-0.509px;">Сборник 63. Стекольные, обойные</div>
<div class="t" style="left:169.67px;top:583px;font-size:12px;font-weight:400;color:#212121;line-height:14px;letter-spacing:-0.375px;">и облицовочные работы (6)</div>
<svg style="left:98px;top:632.5px" width="10" height="6" viewBox="0 0 10 6"><path d="M0.6 0.7L4.45 4.3L8.3 0.7" stroke="#111" stroke-width="1.6" fill="none"/></svg>
<svg style="left:128px;top:607px" width="19" height="17" viewBox="0 0 19 17"><path d="M0.8 0H6.4Q7.2 0 7.8 0.6L9 1.8H17.2Q18 1.8 18 2.6V4.2H0V0.8Q0 0 0.8 0Z" fill="#a67c2e"/>
<path d="M0 3.6H18V16Q18 16.8 17.2 16.8H0.8Q0 16.8 0 16Z" fill="#e6b35a"/></svg>
<div class="t" style="left:151.72px;top:606px;font-size:12px;font-weight:400;color:#212121;line-height:14px;letter-spacing:-0.455px;">Глава  7. Сборники норм и расценок</div>
<div class="t" style="left:151.87px;top:620px;font-size:12px;font-weight:400;color:#212121;line-height:14px;letter-spacing:-0.633px;">на реставрационно-</div>
<div class="t" style="left:151.87px;top:634px;font-size:12px;font-weight:400;color:#212121;line-height:14px;letter-spacing:-0.397px;">восстановительные работы по</div>
<div class="t" style="left:151.87px;top:648px;font-size:12px;font-weight:400;color:#212121;line-height:14px;letter-spacing:-0.329px;">памятникам истории и культуры (38)</div>
<svg style="left:147px;top:670.2px" width="16" height="18" viewBox="0 0 16 18"><rect x="0.5" y="0.5" width="14.8" height="16.9" rx="1" fill="#fff" stroke="#bcbcbc" stroke-width="1"/>
<rect x="2.1" y="2.2" width="11.7" height="1.6" fill="#c6c6c6"/>
<rect x="2.1" y="4.8" width="11.5" height="8.9" rx="1" fill="#b7a3e2"/>
<rect x="3.4" y="5.9" width="5.6" height="1.1" fill="#fff"/><rect x="10" y="5.9" width="2.6" height="1.1" fill="#fff"/>
<rect x="3.4" y="8" width="5.6" height="1.2" fill="#fff"/><rect x="10" y="8" width="2.6" height="1.2" fill="#fff"/>
<rect x="3.4" y="10.1" width="5.6" height="1.1" fill="#fff"/><rect x="10" y="10.1" width="2.6" height="1.1" fill="#fff"/>
<path d="M2.6 7.5H13.2M2.6 9.65H13.2" stroke="#6a45bd" stroke-width="0.8"/><path d="M9.5 5.6V12.6" stroke="#5a35b5" stroke-width="0.9"/>
<rect x="3" y="15.1" width="4.6" height="0.9" fill="#c8c8c8"/><rect x="9.3" y="15.1" width="4" height="0.9" fill="#d2d2d2"/></svg>
<div class="t" style="left:169.89px;top:669px;font-size:12px;font-weight:400;color:#212121;line-height:14px;letter-spacing:-0.477px;">Сборник  4. Реставрация и</div>
<div class="t" style="left:169.67px;top:683px;font-size:12px;font-weight:400;color:#212121;line-height:14px;letter-spacing:-0.274px;">воссоздание конструкций и</div>
<div class="t" style="left:170.38px;top:697px;font-size:12px;font-weight:400;color:#212121;line-height:14px;letter-spacing:-0.366px;">декора из естественного камня</div>
<div class="t" style="left:169.76px;top:711px;font-size:12px;font-weight:400;color:#212121;line-height:14px;letter-spacing:-0.352px;">(38)</div>
<svg style="left:98px;top:760.5px" width="10" height="6" viewBox="0 0 10 6"><path d="M0.6 0.7L4.45 4.3L8.3 0.7" stroke="#111" stroke-width="1.6" fill="none"/></svg>
<svg style="left:128px;top:735px" width="19" height="17" viewBox="0 0 19 17"><path d="M0.8 0H6.4Q7.2 0 7.8 0.6L9 1.8H17.2Q18 1.8 18 2.6V4.2H0V0.8Q0 0 0.8 0Z" fill="#a67c2e"/>
<path d="M0 3.6H18V16Q18 16.8 17.2 16.8H0.8Q0 16.8 0 16Z" fill="#e6b35a"/></svg>
<div class="t" style="left:151.72px;top:734px;font-size:12px;font-weight:400;color:#212121;line-height:14px;letter-spacing:-0.466px;">Глава 14. Сборники норм и расценок</div>
<div class="t" style="left:151.87px;top:748px;font-size:12px;font-weight:400;color:#212121;line-height:14px;letter-spacing:-0.422px;">на техническое обслуживание и</div>
<div class="t" style="left:151.93px;top:762px;font-size:12px;font-weight:400;color:#212121;line-height:14px;letter-spacing:-0.351px;">ремонт оборудования городского</div>
<div class="a" style="left:27px;top:777px;width:348px;height:24px;background:#f9f7fc;"></div>
<svg style="left:496px;top:186px" width="17" height="10" viewBox="496 186 17 10"><path d="M500.6 195V187.6M497.3 191.2L500.6 187.7L503.9 191.2" stroke="#4527a0" stroke-width="1.5" fill="none"/><path d="M504.8 188H511.7M507 191H511.7M504.8 194H511.7" stroke="#6a45bd" stroke-width="1.5" fill="none"/></svg>
<svg style="left:1141px;top:186px" width="12" height="12" viewBox="0 0 12 12"><path d="M0.4 0.1H11.6L7 5.6V11H5V5.6Z" fill="#4a2aa6"/></svg>
<svg style="left:1279px;top:185px" width="14" height="12" viewBox="1279 185 14 12"><path d="M1282.65 186V194.6M1289.2 196V187.4" stroke="#512da8" stroke-width="1.6" fill="none"/><path d="M1280.4 193.3H1284.9L1282.65 196.5Z M1286.8 188.4H1291.6L1289.2 185Z" fill="#512da8"/></svg>
<svg style="left:1146px;top:51px" width="28" height="24" viewBox="1146 51 28 24">
<rect x="1151" y="51.5" width="2.9" height="2.3" fill="#e6b35a"/><rect x="1157.1" y="51.5" width="3" height="2.3" fill="#e6b35a"/>
<rect x="1155" y="55.4" width="1.1" height="5.2" fill="#e6b35a"/>
<path d="M1150.1 54.7H1153.9V61.6L1153 62.2V67.4Q1153 68.3 1152.1 68.3H1147.8Q1146.9 68.3 1146.9 67.4Q1147.3 60 1149.2 55.4Q1149.5 54.7 1150.1 54.7Z" fill="#4f3b9f"/>
<path d="M1161 54.7H1157V61.6L1158 62.2V67.4Q1158 68.3 1158.9 68.3H1163.2Q1164.1 68.3 1164.1 67.4Q1163.7 60 1161.9 55.4Q1161.6 54.7 1161 54.7Z" fill="#4f3b9f"/>
<rect x="1164.7" y="52.4" width="7.8" height="6.9" rx="0.6" fill="#fdf6f4" stroke="#d9513a" stroke-width="1.3"/>
<path d="M1166.5 56.2L1168 57.6L1171 54.6" stroke="#d9513a" stroke-width="1.2" fill="none"/>
<rect x="1165.5" y="64" width="7.6" height="3.6" rx="1.8" fill="#858585"/>
<rect x="1147" y="70.3" width="26.1" height="3.6" rx="1.8" fill="#858585"/>
</svg>
<svg style="left:1320px;top:52px" width="27" height="24" viewBox="0 0 27 24">
<path d="M1.6 0.9H24.4Q25.6 0.9 25.6 2.1V19.2Q25.6 20.4 24.4 20.4H11L9 22.9H1.6Q0.4 22.9 0.4 21.7V2.1Q0.4 0.9 1.6 0.9Z" fill="#faf9fe" stroke="#8d8d8d" stroke-width="1"/>
<rect x="0.4" y="0.6" width="25.2" height="2.2" rx="0.8" fill="#6b6b6b"/>
<path d="M11.2 20.4H20.6L18.8 22.9H9.4Z" fill="#4527a0"/>
<path d="M1.2 22.9H9" stroke="#b5b5b5" stroke-width="1"/>
<path d="M8.2 4.8V19.6" stroke="#7e57c2" stroke-width="1"/><path d="M1.4 10.2H6.6M1.4 12.6H6.6M1.4 15H6.6" stroke="#7e57c2" stroke-width="0.9"/><path d="M22.6 10.4V11.2Q22.6 13 20.8 13H14.6" stroke="#4527a0" stroke-width="1.3" fill="none"/><path d="M16.4 10.3L13.2 13L16.4 15.7Z" fill="#4527a0"/></svg>
<svg style="left:1356px;top:52px" width="27" height="24" viewBox="0 0 27 24">
<path d="M1.6 0.9H24.4Q25.6 0.9 25.6 2.1V19.2Q25.6 20.4 24.4 20.4H11L9 22.9H1.6Q0.4 22.9 0.4 21.7V2.1Q0.4 0.9 1.6 0.9Z" fill="#faf9fe" stroke="#8d8d8d" stroke-width="1"/>
<rect x="0.4" y="0.6" width="25.2" height="2.2" rx="0.8" fill="#6b6b6b"/>
<path d="M11.2 20.4H20.6L18.8 22.9H9.4Z" fill="#4527a0"/>
<path d="M1.2 22.9H9" stroke="#b5b5b5" stroke-width="1"/>
<rect x="2.6" y="4.6" width="9.6" height="9.2" rx="0.6" fill="#faf9fe" stroke="#8d8d8d" stroke-width="0.9"/><rect x="2.4" y="4.4" width="10" height="1.6" fill="#6b6b6b"/><path d="M14.2 9.6H15Q16.6 9.6 16.6 11.2V17" stroke="#4527a0" stroke-width="1.3" fill="none"/><path d="M14 16.4L16.6 19.4L19.2 16.4Z" fill="#4527a0"/></svg>
<div class="a" style="left:1402px;top:67px;width:2px;height:1px;background:#c9bcea;"></div>
<div class="a" style="left:0px;top:32px;width:1.6px;height:1.7px;background:#333;"></div>
<div class="a" style="left:0px;top:34.6px;width:1.6px;height:1.7px;background:#333;"></div>
<div class="a" style="left:0px;top:37.2px;width:1.6px;height:1.7px;background:#333;"></div>
<div class="a" style="left:1px;top:67px;width:1px;height:28px;background:#fbeab8;"></div>
<div class="a" style="left:1px;top:95px;width:1px;height:25px;background:#d9d5e4;"></div>
</body></html>
